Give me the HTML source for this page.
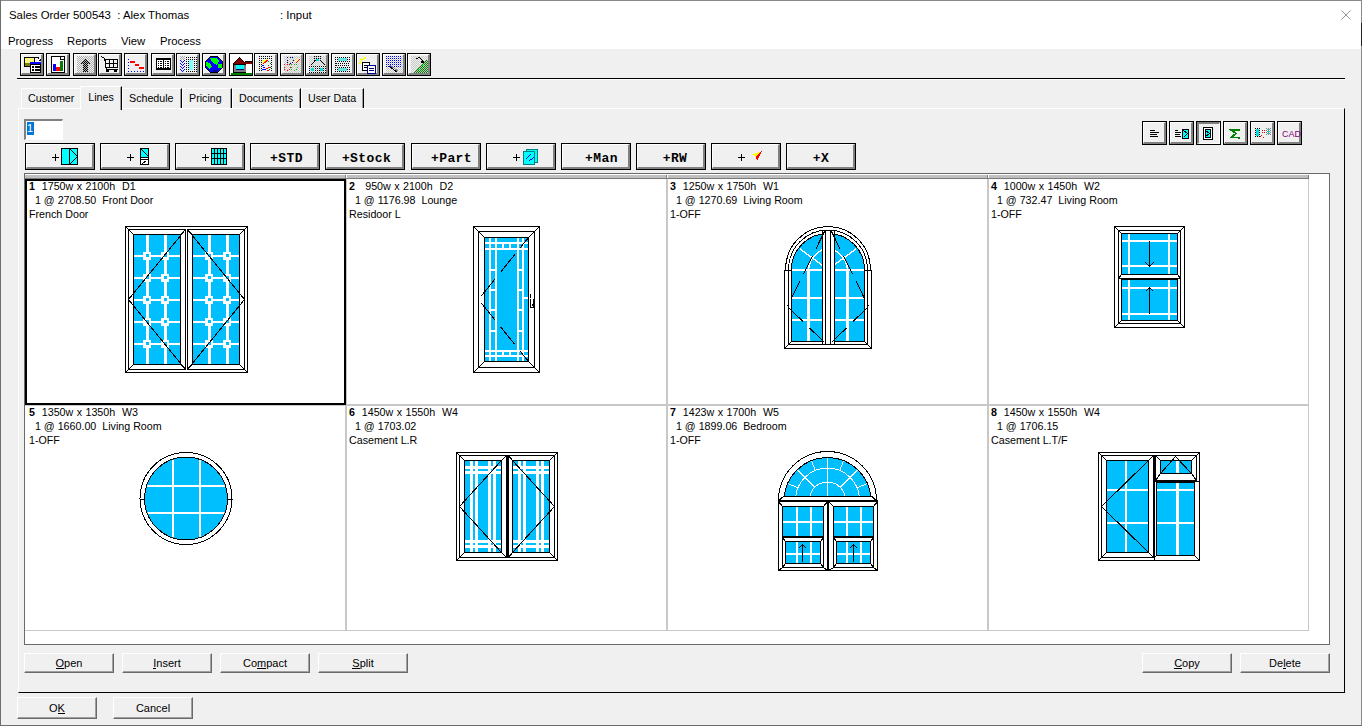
<!DOCTYPE html><html><head><meta charset="utf-8"><style>
*{margin:0;padding:0;box-sizing:border-box}
html,body{width:1362px;height:726px;overflow:hidden;background:#f0f0f0;font-family:"Liberation Sans",sans-serif;font-size:11px;color:#000}
.a{position:absolute}
.t{position:absolute;white-space:pre;line-height:14px}
.c{font-size:10.7px}
.tb{position:absolute;width:24px;height:23px;border:1px solid #000;background:#f0f0f0}
.tb i{position:absolute;left:0;top:0;right:0;bottom:0;border-top:1px solid #fff;border-left:1px solid #fff;border-right:2px solid #808080;border-bottom:2px solid #808080}
.pb{position:absolute;height:27px;border:1px solid #000;background:#f0f0f0;font:bold 13px "Liberation Mono",monospace;text-align:center;line-height:27px}
.pb i{position:absolute;left:0;top:0;right:0;bottom:0;border-top:1px solid #fff;border-left:1px solid #fff;border-right:2px solid #808080;border-bottom:2px solid #808080}
.bb{position:absolute;height:20px;background:#f0f0f0;border-top:1px solid #fff;border-left:1px solid #fff;border-right:1px solid #696969;border-bottom:1px solid #696969;box-shadow:inset -1px -1px 0 #a0a0a0;text-align:center;line-height:18px;font-size:11px}
.tab{position:absolute;top:88px;height:20px;font-size:10.7px;border-top:1px solid #fff;border-left:1px solid #fff;border-right:1px solid #000;box-shadow:inset -1px 0 0 #a0a0a0;text-align:left;padding-left:6px;line-height:18px}
u{text-decoration:none;border-bottom:1px solid #000;line-height:10px;display:inline-block}
</style></head><body>
<div class="a" style="left:0;top:0;width:1362px;height:49px;background:#fff"></div>
<div class="a" style="left:0;top:0;width:1362px;height:1px;background:#8a8a8a"></div>
<div class="a" style="left:0;top:0;width:1px;height:726px;background:#6d6d6d"></div>
<div class="a" style="left:1361px;top:0;width:1px;height:726px;background:#8a8a8a"></div>
<div class="a" style="left:1361px;top:23px;width:1px;height:23px;background:#222"></div>
<div class="a" style="left:0;top:725px;width:1362px;height:1px;background:#6d6d6d"></div>
<div class="t" style="left:9px;top:8px;font-size:11.4px">Sales Order 500543  : Alex Thomas</div>
<div class="t" style="left:280px;top:8px;font-size:11.4px">: Input</div>
<svg class="a" style="left:1340px;top:9px" width="13" height="13"><path d="M1.5 1.5L10.5 10.5M10.5 1.5L1.5 10.5" stroke="#999" stroke-width="1"/></svg>
<div class="t" style="left:8px;top:34px;font-size:11.3px">Progress</div>
<div class="t" style="left:67px;top:34px;font-size:11.3px">Reports</div>
<div class="t" style="left:121px;top:34px;font-size:11.3px">View</div>
<div class="t" style="left:160px;top:34px;font-size:11.3px">Process</div>
<div class="tb" style="left:20px;top:53px"><i></i></div>
<div class="tb" style="left:46px;top:53px"><i></i></div>
<div class="tb" style="left:73px;top:53px"><i></i></div>
<div class="tb" style="left:98px;top:53px"><i></i></div>
<div class="tb" style="left:124px;top:53px"><i></i></div>
<div class="tb" style="left:151px;top:53px"><i></i></div>
<div class="tb" style="left:176px;top:53px"><i></i></div>
<div class="tb" style="left:202px;top:53px"><i></i></div>
<div class="tb" style="left:229px;top:53px"><i style="border-right:1px solid #fff;border-bottom:1px solid #fff;background:#fff"></i></div>
<div class="tb" style="left:254px;top:53px"><i></i></div>
<div class="tb" style="left:280px;top:53px"><i></i></div>
<div class="tb" style="left:305px;top:53px"><i></i></div>
<div class="tb" style="left:331px;top:53px"><i></i></div>
<div class="tb" style="left:356px;top:53px"><i></i></div>
<div class="tb" style="left:382px;top:53px"><i></i></div>
<div class="tb" style="left:407px;top:53px"><i></i></div>
<div class="a" style="left:17px;top:78px;width:1328px;height:1px;background:#000"></div>
<div class="a" style="left:17px;top:79px;width:1328px;height:1px;background:#fff"></div>
<div class="a" style="left:18px;top:108px;width:1327px;height:585px;border-top:1px solid #fff;border-left:1px solid #fff;border-right:1px solid #000;border-bottom:1px solid #000"></div>
<div class="tab" style="left:21px;width:59px;border-right:none;box-shadow:none;">Customer</div>
<div class="tab" style="left:122px;width:60px;">Schedule</div>
<div class="tab" style="left:182px;width:50px;">Pricing</div>
<div class="tab" style="left:232px;width:69px;">Documents</div>
<div class="tab" style="left:301px;width:63px;">User Data</div>
<div class="a" style="left:80px;top:86px;width:42px;height:24px;font-size:10.7px;background:#f0f0f0;border-top:1px solid #fff;border-left:1px solid #fff;border-right:1px solid #000;box-shadow:inset -1px 0 0 #a0a0a0;text-align:center;line-height:20px">Lines</div>
<div class="a" style="left:24px;top:119px;width:39px;height:21px;background:#fff;border-top:2px solid #808080;border-left:2px solid #808080;border-right:1px solid #fff;border-bottom:1px solid #fff"></div>
<div class="a" style="left:27px;top:122px;width:7px;height:13px;background:#0078d7"></div>
<div class="t" style="left:27px;top:121px;color:#fff">1</div>
<div class="pb" style="left:25px;top:143px;width:70px"><i></i></div>
<div class="pb" style="left:100px;top:143px;width:70px"><i></i></div>
<div class="pb" style="left:175px;top:143px;width:70px"><i></i></div>
<div class="pb" style="left:250px;top:143px;width:70px;padding-left:3px;letter-spacing:0.4px;"><i></i><span style="position:relative;top:1px">+STD</span></div>
<div class="pb" style="left:325px;top:143px;width:80px;padding-left:3px;letter-spacing:0.4px;"><i></i><span style="position:relative;top:1px">+Stock</span></div>
<div class="pb" style="left:411px;top:143px;width:70px;padding-left:11px;letter-spacing:0.4px;"><i></i><span style="position:relative;top:1px">+Part</span></div>
<div class="pb" style="left:486px;top:143px;width:70px"><i></i></div>
<div class="pb" style="left:561px;top:143px;width:70px;padding-left:11px;letter-spacing:0.4px;"><i></i><span style="position:relative;top:1px">+Man</span></div>
<div class="pb" style="left:636px;top:143px;width:70px;padding-left:8px;letter-spacing:0.4px;"><i></i><span style="position:relative;top:1px">+RW</span></div>
<div class="pb" style="left:711px;top:143px;width:70px"><i></i></div>
<div class="pb" style="left:786px;top:143px;width:70px;padding-left:0px;letter-spacing:0.4px;"><i></i><span style="position:relative;top:1px">+X</span></div>
<svg class="a" style="left:52px;top:153px" width="8" height="9" shape-rendering="crispEdges"><path d="M0 4h7M3 0v7" stroke="#000" transform="translate(0,0.5)" /></svg>
<svg class="a" style="left:127px;top:153px" width="8" height="9" shape-rendering="crispEdges"><path d="M0 4h7M3 0v7" stroke="#000" transform="translate(0,0.5)" /></svg>
<svg class="a" style="left:202px;top:153px" width="8" height="9" shape-rendering="crispEdges"><path d="M0 4h7M3 0v7" stroke="#000" transform="translate(0,0.5)" /></svg>
<svg class="a" style="left:513px;top:153px" width="8" height="9" shape-rendering="crispEdges"><path d="M0 4h7M3 0v7" stroke="#000" transform="translate(0,0.5)" /></svg>
<svg class="a" style="left:738px;top:153px" width="8" height="9" shape-rendering="crispEdges"><path d="M0 4h7M3 0v7" stroke="#000" transform="translate(0,0.5)" /></svg>
<div class="tb" style="left:1142px;top:121px;width:25px;height:24px"><i></i></div>
<div class="tb" style="left:1169px;top:121px;width:25px;height:24px"><i></i></div>
<div class="tb" style="left:1196px;top:121px;width:25px;height:24px"><i style="border-top:2px solid #808080;border-left:2px solid #808080;border-right:1px solid #fff;border-bottom:1px solid #fff"></i></div>
<div class="tb" style="left:1223px;top:121px;width:25px;height:24px"><i></i></div>
<div class="tb" style="left:1250px;top:121px;width:25px;height:24px"><i></i></div>
<div class="tb" style="left:1277px;top:121px;width:25px;height:24px"><i></i></div>
<div class="a" style="left:24px;top:173px;width:1306px;height:472px;background:#fff;border:1px solid #6a6a6a"></div>
<div class="a" style="left:25px;top:175px;width:1284px;height:3px;background:#c0c0c0"></div>
<div class="a" style="left:25px;top:178px;width:1284px;height:1px;background:#7a7a7a"></div>
<div class="a" style="left:1308px;top:175px;width:1px;height:4px;background:#7a7a7a"></div>
<div class="a" style="left:345px;top:175px;width:1px;height:3px;background:#808080"></div>
<div class="a" style="left:346px;top:175px;width:1px;height:3px;background:#fff"></div>
<div class="a" style="left:666px;top:175px;width:1px;height:3px;background:#808080"></div>
<div class="a" style="left:667px;top:175px;width:1px;height:3px;background:#fff"></div>
<div class="a" style="left:987px;top:175px;width:1px;height:3px;background:#808080"></div>
<div class="a" style="left:988px;top:175px;width:1px;height:3px;background:#fff"></div>
<div class="a" style="left:345px;top:179px;width:2px;height:452px;background:#c8c8c8"></div>
<div class="a" style="left:666px;top:179px;width:2px;height:452px;background:#c8c8c8"></div>
<div class="a" style="left:987px;top:179px;width:2px;height:452px;background:#c8c8c8"></div>
<div class="a" style="left:1308px;top:179px;width:1px;height:452px;background:#c8c8c8"></div>
<div class="a" style="left:25px;top:404px;width:1284px;height:2px;background:#c8c8c8"></div>
<div class="a" style="left:25px;top:630px;width:1284px;height:1px;background:#c8c8c8"></div>
<div class="a" style="left:25px;top:179px;width:321px;height:226px;border:2px solid #000"></div>
<div class="t c" style="left:29px;top:179px;word-spacing:0.45px"><b>1</b>  1750w x 2100h  D1</div>
<div class="t c" style="left:29px;top:193px">  1 @ 2708.50  Front Door</div>
<div class="t c" style="left:29px;top:207px">French Door</div>
<div class="t c" style="left:349px;top:179px;word-spacing:0.45px"><b>2</b>   950w x 2100h  D2</div>
<div class="t c" style="left:349px;top:193px">  1 @ 1176.98  Lounge</div>
<div class="t c" style="left:349px;top:207px">Residoor L</div>
<div class="t c" style="left:670px;top:179px;word-spacing:0.45px"><b>3</b>  1250w x 1750h  W1</div>
<div class="t c" style="left:670px;top:193px">  1 @ 1270.69  Living Room</div>
<div class="t c" style="left:670px;top:207px">1-OFF</div>
<div class="t c" style="left:991px;top:179px;word-spacing:0.45px"><b>4</b>  1000w x 1450h  W2</div>
<div class="t c" style="left:991px;top:193px">  1 @ 732.47  Living Room</div>
<div class="t c" style="left:991px;top:207px">1-OFF</div>
<div class="t c" style="left:29px;top:405px;word-spacing:0.45px"><b>5</b>  1350w x 1350h  W3</div>
<div class="t c" style="left:29px;top:419px">  1 @ 1660.00  Living Room</div>
<div class="t c" style="left:29px;top:433px">1-OFF</div>
<div class="t c" style="left:349px;top:405px;word-spacing:0.45px"><b>6</b>  1450w x 1550h  W4</div>
<div class="t c" style="left:349px;top:419px">  1 @ 1703.02</div>
<div class="t c" style="left:349px;top:433px">Casement L.R</div>
<div class="t c" style="left:670px;top:405px;word-spacing:0.45px"><b>7</b>  1423w x 1700h  W5</div>
<div class="t c" style="left:670px;top:419px">  1 @ 1899.06  Bedroom</div>
<div class="t c" style="left:670px;top:433px">1-OFF</div>
<div class="t c" style="left:991px;top:405px;word-spacing:0.45px"><b>8</b>  1450w x 1550h  W4</div>
<div class="t c" style="left:991px;top:419px">  1 @ 1706.15</div>
<div class="t c" style="left:991px;top:433px">Casement L.T/F</div>
<svg class="a" style="left:0;top:0" width="1362" height="726" shape-rendering="crispEdges">
<rect x="125" y="226" width="123" height="147" fill="#fff"/>
<rect x="125" y="226" width="123" height="1" fill="#000"/>
<rect x="125" y="372" width="123" height="1" fill="#000"/>
<rect x="125" y="226" width="1" height="147" fill="#000"/>
<rect x="247" y="226" width="1" height="147" fill="#000"/>
<path d="M125.5 226.5L128.5 229.5" stroke="#000" fill="none" />
<path d="M247.5 226.5L244.5 229.5" stroke="#000" fill="none" />
<path d="M125.5 372.5L128.5 369.5" stroke="#000" fill="none" />
<path d="M247.5 372.5L244.5 369.5" stroke="#000" fill="none" />
<rect x="128" y="229" width="58" height="141" fill="#fff"/>
<rect x="128" y="229" width="58" height="1" fill="#000"/>
<rect x="128" y="369" width="58" height="1" fill="#000"/>
<rect x="128" y="229" width="1" height="141" fill="#000"/>
<rect x="185" y="229" width="1" height="141" fill="#000"/>
<rect x="133" y="234" width="48" height="131" fill="#00bfff"/>
<rect x="133" y="234" width="48" height="1" fill="#000"/>
<rect x="133" y="364" width="48" height="1" fill="#000"/>
<rect x="133" y="234" width="1" height="131" fill="#000"/>
<rect x="180" y="234" width="1" height="131" fill="#000"/>
<path d="M128.5 229.5L133.5 234.5" stroke="#000" fill="none" />
<path d="M185.5 229.5L180.5 234.5" stroke="#000" fill="none" />
<path d="M128.5 369.5L133.5 364.5" stroke="#000" fill="none" />
<path d="M185.5 369.5L180.5 364.5" stroke="#000" fill="none" />
<rect x="187" y="229" width="58" height="141" fill="#fff"/>
<rect x="187" y="229" width="58" height="1" fill="#000"/>
<rect x="187" y="369" width="58" height="1" fill="#000"/>
<rect x="187" y="229" width="1" height="141" fill="#000"/>
<rect x="244" y="229" width="1" height="141" fill="#000"/>
<rect x="192" y="234" width="48" height="131" fill="#00bfff"/>
<rect x="192" y="234" width="48" height="1" fill="#000"/>
<rect x="192" y="364" width="48" height="1" fill="#000"/>
<rect x="192" y="234" width="1" height="131" fill="#000"/>
<rect x="239" y="234" width="1" height="131" fill="#000"/>
<path d="M187.5 229.5L192.5 234.5" stroke="#000" fill="none" />
<path d="M244.5 229.5L239.5 234.5" stroke="#000" fill="none" />
<path d="M187.5 369.5L192.5 364.5" stroke="#000" fill="none" />
<path d="M244.5 369.5L239.5 364.5" stroke="#000" fill="none" />
<rect x="146" y="235" width="3" height="129" fill="#fff"/>
<rect x="164" y="235" width="3" height="129" fill="#fff"/>
<rect x="134" y="255" width="46" height="2" fill="#fff"/>
<rect x="143" y="252" width="8" height="8" fill="#fff"/>
<rect x="146" y="254" width="3" height="3" fill="#00bfff"/>
<rect x="161" y="252" width="8" height="8" fill="#fff"/>
<rect x="164" y="254" width="3" height="3" fill="#00bfff"/>
<rect x="134" y="277" width="46" height="2" fill="#fff"/>
<rect x="143" y="274" width="8" height="8" fill="#fff"/>
<rect x="146" y="276" width="3" height="3" fill="#00bfff"/>
<rect x="161" y="274" width="8" height="8" fill="#fff"/>
<rect x="164" y="276" width="3" height="3" fill="#00bfff"/>
<rect x="134" y="299" width="46" height="2" fill="#fff"/>
<rect x="143" y="296" width="8" height="8" fill="#fff"/>
<rect x="146" y="298" width="3" height="3" fill="#00bfff"/>
<rect x="161" y="296" width="8" height="8" fill="#fff"/>
<rect x="164" y="298" width="3" height="3" fill="#00bfff"/>
<rect x="134" y="321" width="46" height="2" fill="#fff"/>
<rect x="143" y="318" width="8" height="8" fill="#fff"/>
<rect x="146" y="320" width="3" height="3" fill="#00bfff"/>
<rect x="161" y="318" width="8" height="8" fill="#fff"/>
<rect x="164" y="320" width="3" height="3" fill="#00bfff"/>
<rect x="134" y="343" width="46" height="2" fill="#fff"/>
<rect x="143" y="340" width="8" height="8" fill="#fff"/>
<rect x="146" y="342" width="3" height="3" fill="#00bfff"/>
<rect x="161" y="340" width="8" height="8" fill="#fff"/>
<rect x="164" y="342" width="3" height="3" fill="#00bfff"/>
<rect x="208" y="235" width="3" height="129" fill="#fff"/>
<rect x="226" y="235" width="3" height="129" fill="#fff"/>
<rect x="193" y="255" width="46" height="2" fill="#fff"/>
<rect x="205" y="252" width="8" height="8" fill="#fff"/>
<rect x="208" y="254" width="3" height="3" fill="#00bfff"/>
<rect x="223" y="252" width="8" height="8" fill="#fff"/>
<rect x="226" y="254" width="3" height="3" fill="#00bfff"/>
<rect x="193" y="277" width="46" height="2" fill="#fff"/>
<rect x="205" y="274" width="8" height="8" fill="#fff"/>
<rect x="208" y="276" width="3" height="3" fill="#00bfff"/>
<rect x="223" y="274" width="8" height="8" fill="#fff"/>
<rect x="226" y="276" width="3" height="3" fill="#00bfff"/>
<rect x="193" y="299" width="46" height="2" fill="#fff"/>
<rect x="205" y="296" width="8" height="8" fill="#fff"/>
<rect x="208" y="298" width="3" height="3" fill="#00bfff"/>
<rect x="223" y="296" width="8" height="8" fill="#fff"/>
<rect x="226" y="298" width="3" height="3" fill="#00bfff"/>
<rect x="193" y="321" width="46" height="2" fill="#fff"/>
<rect x="205" y="318" width="8" height="8" fill="#fff"/>
<rect x="208" y="320" width="3" height="3" fill="#00bfff"/>
<rect x="223" y="318" width="8" height="8" fill="#fff"/>
<rect x="226" y="320" width="3" height="3" fill="#00bfff"/>
<rect x="193" y="343" width="46" height="2" fill="#fff"/>
<rect x="205" y="340" width="8" height="8" fill="#fff"/>
<rect x="208" y="342" width="3" height="3" fill="#00bfff"/>
<rect x="223" y="340" width="8" height="8" fill="#fff"/>
<rect x="226" y="342" width="3" height="3" fill="#00bfff"/>
<path d="M185.5 229.5L128.5 299.5" stroke="#000" fill="none" />
<path d="M128.5 299.5L185.5 369.5" stroke="#000" fill="none" />
<path d="M187.5 229.5L244.5 299.5" stroke="#000" fill="none" />
<path d="M244.5 299.5L187.5 369.5" stroke="#000" fill="none" />
<rect x="473" y="226" width="67" height="147" fill="#fff"/>
<rect x="473" y="226" width="67" height="1" fill="#000"/>
<rect x="473" y="372" width="67" height="1" fill="#000"/>
<rect x="473" y="226" width="1" height="147" fill="#000"/>
<rect x="539" y="226" width="1" height="147" fill="#000"/>
<path d="M473.5 226.5L478.5 231.5" stroke="#000" fill="none" />
<path d="M539.5 226.5L534.5 231.5" stroke="#000" fill="none" />
<path d="M473.5 372.5L478.5 367.5" stroke="#000" fill="none" />
<path d="M539.5 372.5L534.5 367.5" stroke="#000" fill="none" />
<rect x="478" y="231" width="57" height="137" fill="#fff"/>
<rect x="478" y="231" width="57" height="1" fill="#000"/>
<rect x="478" y="367" width="57" height="1" fill="#000"/>
<rect x="478" y="231" width="1" height="137" fill="#000"/>
<rect x="534" y="231" width="1" height="137" fill="#000"/>
<rect x="484" y="237" width="45" height="125" fill="#00bfff"/>
<rect x="484" y="237" width="45" height="1" fill="#000"/>
<rect x="484" y="361" width="45" height="1" fill="#000"/>
<rect x="484" y="237" width="1" height="125" fill="#000"/>
<rect x="528" y="237" width="1" height="125" fill="#000"/>
<path d="M478.5 231.5L484.5 237.5" stroke="#000" fill="none" />
<path d="M534.5 231.5L528.5 237.5" stroke="#000" fill="none" />
<path d="M478.5 367.5L484.5 361.5" stroke="#000" fill="none" />
<path d="M534.5 367.5L528.5 361.5" stroke="#000" fill="none" />
<rect x="489" y="238" width="2" height="123" fill="#fff"/>
<rect x="495" y="238" width="2" height="123" fill="#fff"/>
<rect x="517" y="238" width="2" height="123" fill="#fff"/>
<rect x="522" y="238" width="2" height="123" fill="#fff"/>
<rect x="485" y="242" width="43" height="2" fill="#fff"/>
<rect x="485" y="248" width="43" height="2" fill="#fff"/>
<rect x="485" y="350" width="43" height="2" fill="#fff"/>
<rect x="485" y="355" width="43" height="2" fill="#fff"/>
<rect x="502" y="244" width="2" height="4" fill="#fff"/>
<rect x="502" y="352" width="2" height="3" fill="#fff"/>
<rect x="509" y="244" width="2" height="4" fill="#fff"/>
<rect x="509" y="352" width="2" height="3" fill="#fff"/>
<rect x="491" y="269" width="4" height="2" fill="#fff"/>
<rect x="519" y="269" width="3" height="2" fill="#fff"/>
<rect x="491" y="289" width="4" height="2" fill="#fff"/>
<rect x="519" y="289" width="3" height="2" fill="#fff"/>
<rect x="491" y="309" width="4" height="2" fill="#fff"/>
<rect x="519" y="309" width="3" height="2" fill="#fff"/>
<rect x="491" y="330" width="4" height="2" fill="#fff"/>
<rect x="519" y="330" width="3" height="2" fill="#fff"/>
<rect x="524" y="297" width="4" height="2" fill="#fff"/>
<path d="M528.5 237.5L478.5 299.5L528.5 361.5" stroke="#000" fill="none" stroke-dasharray="22 9" stroke-dashoffset="9"/>
<rect x="530" y="294" width="1" height="4" fill="#000"/>
<path d="M530.5 298.5V307.5H533.5V298.5" stroke="#000" fill="none" />
<rect x="532" y="304" width="1" height="2" fill="#000"/>
<rect x="784" y="270" width="1" height="79" fill="#000"/>
<rect x="871" y="270" width="1" height="79" fill="#000"/>
<rect x="784" y="348" width="88" height="1" fill="#000"/>
<rect x="785" y="270" width="86" height="78" fill="#fff"/>
<path d="M785.5 269.5A42.5 43 0 0 1 870.5 269.5" stroke="#000" fill="#fff" />
<rect x="786" y="262" width="84" height="8" fill="#fff"/>
<path d="M785.5 269.5A42.5 43 0 0 1 870.5 269.5" stroke="#000" fill="#fff" />
<path d="M788.5 269.5A39.5 39.5 0 0 1 867.5 269.5" stroke="#000" fill="none" />
<rect x="788" y="270" width="1" height="75" fill="#000"/>
<rect x="867" y="270" width="1" height="75" fill="#000"/>
<path d="M791.5 341.5V269.5A36.5 36 0 0 1 864.5 269.5V341.5Z" stroke="#000" fill="#00bfff" />
<rect x="784" y="270" width="8" height="1" fill="#000"/>
<rect x="864" y="270" width="8" height="1" fill="#000"/>
<rect x="792" y="269" width="72" height="2" fill="#fff"/>
<rect x="792" y="297" width="72" height="2" fill="#fff"/>
<rect x="792" y="319" width="72" height="2" fill="#fff"/>
<rect x="807" y="269" width="3" height="72" fill="#fff"/>
<rect x="846" y="269" width="3" height="72" fill="#fff"/>
<path d="M800 249L822 265M808.5 269Q810 256 822 250M856 249L834 265M847.5 269Q846 256 834 250" stroke="#fff" fill="none" stroke-width="1.5"/>
<rect x="822" y="230" width="13" height="112" fill="#fff"/>
<rect x="822" y="230" width="1" height="115" fill="#000"/>
<rect x="825" y="230" width="1" height="115" fill="#000"/>
<rect x="830" y="230" width="1" height="115" fill="#000"/>
<rect x="834" y="230" width="1" height="115" fill="#000"/>
<rect x="822" y="230" width="13" height="1" fill="#000"/>
<rect x="788" y="344" width="80" height="1" fill="#000"/>
<path d="M784.5 348.5L788.5 344.5" stroke="#000" fill="none" />
<path d="M871.5 348.5L867.5 344.5" stroke="#000" fill="none" />
<path d="M788.5 344.5L791.5 341.5" stroke="#000" fill="none" />
<path d="M867.5 344.5L864.5 341.5" stroke="#000" fill="none" />
<path d="M824.5 231.5L787.5 306.5" stroke="#000" fill="none" stroke-dasharray="20 7.5"/>
<path d="M787.5 306.5L824.5 342.5" stroke="#000" fill="none" stroke-dasharray="0 2.5 19 9 20"/>
<path d="M831.5 231.5L868.5 306.5" stroke="#000" fill="none" stroke-dasharray="20 7.5"/>
<path d="M868.5 306.5L831.5 342.5" stroke="#000" fill="none" stroke-dasharray="0 2.5 19 9 20"/>
<rect x="1114" y="226" width="71" height="102" fill="#fff"/>
<rect x="1114" y="226" width="71" height="1" fill="#000"/>
<rect x="1114" y="327" width="71" height="1" fill="#000"/>
<rect x="1114" y="226" width="1" height="102" fill="#000"/>
<rect x="1184" y="226" width="1" height="102" fill="#000"/>
<path d="M1114.5 226.5L1118.5 230.5" stroke="#000" fill="none" />
<path d="M1184.5 226.5L1180.5 230.5" stroke="#000" fill="none" />
<path d="M1114.5 327.5L1118.5 323.5" stroke="#000" fill="none" />
<path d="M1184.5 327.5L1180.5 323.5" stroke="#000" fill="none" />
<rect x="1118" y="275" width="63" height="49" fill="#fff"/>
<rect x="1118" y="275" width="63" height="1" fill="#000"/>
<rect x="1118" y="323" width="63" height="1" fill="#000"/>
<rect x="1118" y="275" width="1" height="49" fill="#000"/>
<rect x="1180" y="275" width="1" height="49" fill="#000"/>
<rect x="1121" y="279" width="57" height="42" fill="#00bfff"/>
<rect x="1121" y="279" width="57" height="1" fill="#000"/>
<rect x="1121" y="320" width="57" height="1" fill="#000"/>
<rect x="1121" y="279" width="1" height="42" fill="#000"/>
<rect x="1177" y="279" width="1" height="42" fill="#000"/>
<path d="M1118.5 275.5L1121.5 279.5" stroke="#000" fill="none" />
<path d="M1180.5 275.5L1177.5 279.5" stroke="#000" fill="none" />
<path d="M1118.5 323.5L1121.5 320.5" stroke="#000" fill="none" />
<path d="M1180.5 323.5L1177.5 320.5" stroke="#000" fill="none" />
<rect x="1118" y="230" width="63" height="49" fill="#fff"/>
<rect x="1118" y="230" width="63" height="1" fill="#000"/>
<rect x="1118" y="278" width="63" height="1" fill="#000"/>
<rect x="1118" y="230" width="1" height="49" fill="#000"/>
<rect x="1180" y="230" width="1" height="49" fill="#000"/>
<rect x="1121" y="233" width="57" height="42" fill="#00bfff"/>
<rect x="1121" y="233" width="57" height="1" fill="#000"/>
<rect x="1121" y="274" width="57" height="1" fill="#000"/>
<rect x="1121" y="233" width="1" height="42" fill="#000"/>
<rect x="1177" y="233" width="1" height="42" fill="#000"/>
<path d="M1118.5 230.5L1121.5 233.5" stroke="#000" fill="none" />
<path d="M1180.5 230.5L1177.5 233.5" stroke="#000" fill="none" />
<path d="M1118.5 278.5L1121.5 274.5" stroke="#000" fill="none" />
<path d="M1180.5 278.5L1177.5 274.5" stroke="#000" fill="none" />
<rect x="1128" y="234" width="2" height="40" fill="#fff"/>
<rect x="1168" y="234" width="2" height="40" fill="#fff"/>
<rect x="1122" y="240" width="55" height="2" fill="#fff"/>
<rect x="1122" y="265" width="55" height="2" fill="#fff"/>
<rect x="1128" y="280" width="2" height="40" fill="#fff"/>
<rect x="1168" y="280" width="2" height="40" fill="#fff"/>
<rect x="1122" y="287" width="55" height="2" fill="#fff"/>
<rect x="1122" y="313" width="55" height="2" fill="#fff"/>
<rect x="1149" y="241" width="1" height="26" fill="#000"/>
<path d="M1145.5 262.5L1149.5 266.5L1153.5 262.5" stroke="#000" fill="none" />
<rect x="1149" y="287" width="1" height="27" fill="#000"/>
<path d="M1145.5 291.5L1149.5 287.5L1153.5 291.5" stroke="#000" fill="none" />
<circle cx="186" cy="498.5" r="46" fill="#fff" stroke="#000"/>
<circle cx="186" cy="498.5" r="41.5" fill="#00bfff" stroke="#000"/>
<clipPath id="c5"><circle cx="186" cy="498.5" r="41"/></clipPath>
<g clip-path="url(#c5)">
<rect x="172" y="450" width="2" height="101" fill="#fff"/>
<rect x="199" y="450" width="2" height="101" fill="#fff"/>
<rect x="140" y="485" width="93" height="2" fill="#fff"/>
<rect x="140" y="512" width="93" height="2" fill="#fff"/>
</g>
<rect x="140" y="499" width="5" height="1" fill="#000"/>
<rect x="228" y="499" width="5" height="1" fill="#000"/>
<rect x="456" y="452" width="102" height="109" fill="#fff"/>
<rect x="456" y="452" width="102" height="1" fill="#000"/>
<rect x="456" y="560" width="102" height="1" fill="#000"/>
<rect x="456" y="452" width="1" height="109" fill="#000"/>
<rect x="557" y="452" width="1" height="109" fill="#000"/>
<path d="M456.5 452.5L459.5 455.5" stroke="#000" fill="none" />
<path d="M557.5 452.5L554.5 455.5" stroke="#000" fill="none" />
<path d="M456.5 560.5L459.5 557.5" stroke="#000" fill="none" />
<path d="M557.5 560.5L554.5 557.5" stroke="#000" fill="none" />
<rect x="459" y="455" width="48" height="103" fill="#fff"/>
<rect x="459" y="455" width="48" height="1" fill="#000"/>
<rect x="459" y="557" width="48" height="1" fill="#000"/>
<rect x="459" y="455" width="1" height="103" fill="#000"/>
<rect x="506" y="455" width="1" height="103" fill="#000"/>
<rect x="464" y="460" width="38" height="93" fill="#00bfff"/>
<rect x="464" y="460" width="38" height="1" fill="#000"/>
<rect x="464" y="552" width="38" height="1" fill="#000"/>
<rect x="464" y="460" width="1" height="93" fill="#000"/>
<rect x="501" y="460" width="1" height="93" fill="#000"/>
<path d="M459.5 455.5L464.5 460.5" stroke="#000" fill="none" />
<path d="M506.5 455.5L501.5 460.5" stroke="#000" fill="none" />
<path d="M459.5 557.5L464.5 552.5" stroke="#000" fill="none" />
<path d="M506.5 557.5L501.5 552.5" stroke="#000" fill="none" />
<rect x="508" y="455" width="47" height="103" fill="#fff"/>
<rect x="508" y="455" width="47" height="1" fill="#000"/>
<rect x="508" y="557" width="47" height="1" fill="#000"/>
<rect x="508" y="455" width="1" height="103" fill="#000"/>
<rect x="554" y="455" width="1" height="103" fill="#000"/>
<rect x="512" y="460" width="38" height="93" fill="#00bfff"/>
<rect x="512" y="460" width="38" height="1" fill="#000"/>
<rect x="512" y="552" width="38" height="1" fill="#000"/>
<rect x="512" y="460" width="1" height="93" fill="#000"/>
<rect x="549" y="460" width="1" height="93" fill="#000"/>
<path d="M508.5 455.5L512.5 460.5" stroke="#000" fill="none" />
<path d="M554.5 455.5L549.5 460.5" stroke="#000" fill="none" />
<path d="M508.5 557.5L512.5 552.5" stroke="#000" fill="none" />
<path d="M554.5 557.5L549.5 552.5" stroke="#000" fill="none" />
<rect x="506" y="455" width="2" height="103" fill="#000"/>
<rect x="470" y="461" width="3" height="91" fill="#fff"/>
<rect x="475" y="461" width="3" height="91" fill="#fff"/>
<rect x="488" y="461" width="3" height="91" fill="#fff"/>
<rect x="493" y="461" width="3" height="91" fill="#fff"/>
<rect x="465" y="466" width="36" height="3" fill="#fff"/>
<rect x="465" y="471" width="36" height="3" fill="#fff"/>
<rect x="465" y="540" width="36" height="3" fill="#fff"/>
<rect x="465" y="545" width="36" height="3" fill="#fff"/>
<rect x="518" y="461" width="3" height="91" fill="#fff"/>
<rect x="523" y="461" width="3" height="91" fill="#fff"/>
<rect x="536" y="461" width="3" height="91" fill="#fff"/>
<rect x="541" y="461" width="3" height="91" fill="#fff"/>
<rect x="513" y="466" width="36" height="3" fill="#fff"/>
<rect x="513" y="471" width="36" height="3" fill="#fff"/>
<rect x="513" y="540" width="36" height="3" fill="#fff"/>
<rect x="513" y="545" width="36" height="3" fill="#fff"/>
<path d="M501.5 460.5L459.5 506.5" stroke="#000" fill="none" />
<path d="M459.5 506.5L501.5 552.5" stroke="#000" fill="none" />
<path d="M512.5 460.5L554.5 506.5" stroke="#000" fill="none" />
<path d="M554.5 506.5L512.5 552.5" stroke="#000" fill="none" />
<path d="M778.5 500.5A49 49 0 0 1 876.5 500.5Z" stroke="#000" fill="#fff" />
<clipPath id="c7g"><rect x="770" y="440" width="120" height="56.5"/></clipPath>
<circle cx="827.5" cy="501" r="43.5" fill="#00bfff" stroke="#000" clip-path="url(#c7g)"/>
<clipPath id="c7"><circle cx="827.5" cy="501" r="43"/></clipPath><g clip-path="url(#c7g)"><g clip-path="url(#c7)" stroke="#fff" fill="none">
<circle cx="827.5" cy="500" r="18"/><circle cx="827.5" cy="500" r="32"/>
<path d="M827.5 457V496M814.8 487.3L795 467.5M840.2 487.3L860 467.5M798 487.8L784 482M857 487.8L871 482M815.3 470.4L809 455M839.7 470.4L846 455"/>
</g></g>
<rect x="783" y="496" width="90" height="1" fill="#000"/>
<rect x="778" y="500" width="100" height="2" fill="#000"/>
<path d="M778.5 500.5L783.5 496.5" stroke="#000" fill="none" />
<path d="M876.5 500.5L871.5 496.5" stroke="#000" fill="none" />
<rect x="778" y="500" width="100" height="71" fill="#fff"/>
<rect x="778" y="500" width="100" height="1" fill="#000"/>
<rect x="778" y="570" width="100" height="1" fill="#000"/>
<rect x="778" y="500" width="1" height="71" fill="#000"/>
<rect x="877" y="500" width="1" height="71" fill="#000"/>
<rect x="778" y="501" width="100" height="1" fill="#000"/>
<rect x="827" y="502" width="2" height="69" fill="#000"/>
<path d="M778.5 501.5L782.5 506.5" stroke="#000" fill="none" />
<path d="M827.5 501.5L823.5 506.5" stroke="#000" fill="none" />
<path d="M778.5 570.5L782.5 567.5" stroke="#000" fill="none" />
<path d="M827.5 570.5L823.5 567.5" stroke="#000" fill="none" />
<rect x="782" y="506" width="42" height="31" fill="#00bfff"/>
<rect x="782" y="506" width="42" height="1" fill="#000"/>
<rect x="782" y="536" width="42" height="1" fill="#000"/>
<rect x="782" y="506" width="1" height="31" fill="#000"/>
<rect x="823" y="506" width="1" height="31" fill="#000"/>
<rect x="782" y="537" width="42" height="31" fill="#fff"/>
<rect x="782" y="537" width="42" height="1" fill="#000"/>
<rect x="782" y="567" width="42" height="1" fill="#000"/>
<rect x="782" y="537" width="1" height="31" fill="#000"/>
<rect x="823" y="537" width="1" height="31" fill="#000"/>
<rect x="785" y="541" width="36" height="23" fill="#00bfff"/>
<rect x="785" y="541" width="36" height="1" fill="#000"/>
<rect x="785" y="563" width="36" height="1" fill="#000"/>
<rect x="785" y="541" width="1" height="23" fill="#000"/>
<rect x="820" y="541" width="1" height="23" fill="#000"/>
<path d="M782.5 537.5L785.5 541.5" stroke="#000" fill="none" />
<path d="M823.5 537.5L820.5 541.5" stroke="#000" fill="none" />
<path d="M782.5 567.5L785.5 563.5" stroke="#000" fill="none" />
<path d="M823.5 567.5L820.5 563.5" stroke="#000" fill="none" />
<rect x="796" y="507" width="2" height="29" fill="#fff"/>
<rect x="796" y="542" width="2" height="21" fill="#fff"/>
<rect x="810" y="507" width="2" height="29" fill="#fff"/>
<rect x="810" y="542" width="2" height="21" fill="#fff"/>
<rect x="783" y="521" width="40" height="2" fill="#fff"/>
<rect x="786" y="553" width="34" height="2" fill="#fff"/>
<rect x="802" y="545" width="1" height="17" fill="#000"/>
<path d="M798.5 548.5L802.5 544.5L806.5 548.5" stroke="#000" fill="none" />
<path d="M828.5 501.5L833.5 506.5" stroke="#000" fill="none" />
<path d="M877.5 501.5L873.5 506.5" stroke="#000" fill="none" />
<path d="M828.5 570.5L833.5 567.5" stroke="#000" fill="none" />
<path d="M877.5 570.5L873.5 567.5" stroke="#000" fill="none" />
<rect x="833" y="506" width="41" height="31" fill="#00bfff"/>
<rect x="833" y="506" width="41" height="1" fill="#000"/>
<rect x="833" y="536" width="41" height="1" fill="#000"/>
<rect x="833" y="506" width="1" height="31" fill="#000"/>
<rect x="873" y="506" width="1" height="31" fill="#000"/>
<rect x="833" y="537" width="41" height="31" fill="#fff"/>
<rect x="833" y="537" width="41" height="1" fill="#000"/>
<rect x="833" y="567" width="41" height="1" fill="#000"/>
<rect x="833" y="537" width="1" height="31" fill="#000"/>
<rect x="873" y="537" width="1" height="31" fill="#000"/>
<rect x="836" y="541" width="35" height="23" fill="#00bfff"/>
<rect x="836" y="541" width="35" height="1" fill="#000"/>
<rect x="836" y="563" width="35" height="1" fill="#000"/>
<rect x="836" y="541" width="1" height="23" fill="#000"/>
<rect x="870" y="541" width="1" height="23" fill="#000"/>
<path d="M833.5 537.5L836.5 541.5" stroke="#000" fill="none" />
<path d="M873.5 537.5L870.5 541.5" stroke="#000" fill="none" />
<path d="M833.5 567.5L836.5 563.5" stroke="#000" fill="none" />
<path d="M873.5 567.5L870.5 563.5" stroke="#000" fill="none" />
<rect x="846" y="507" width="2" height="29" fill="#fff"/>
<rect x="846" y="542" width="2" height="21" fill="#fff"/>
<rect x="860" y="507" width="2" height="29" fill="#fff"/>
<rect x="860" y="542" width="2" height="21" fill="#fff"/>
<rect x="834" y="521" width="39" height="2" fill="#fff"/>
<rect x="837" y="553" width="33" height="2" fill="#fff"/>
<rect x="853" y="545" width="1" height="17" fill="#000"/>
<path d="M849.5 548.5L853.5 544.5L857.5 548.5" stroke="#000" fill="none" />
<rect x="1098" y="452" width="102" height="109" fill="#fff"/>
<rect x="1098" y="452" width="102" height="1" fill="#000"/>
<rect x="1098" y="560" width="102" height="1" fill="#000"/>
<rect x="1098" y="452" width="1" height="109" fill="#000"/>
<rect x="1199" y="452" width="1" height="109" fill="#000"/>
<path d="M1098.5 452.5L1101.5 455.5" stroke="#000" fill="none" />
<path d="M1098.5 560.5L1101.5 557.5" stroke="#000" fill="none" />
<rect x="1101" y="455" width="53" height="103" fill="#fff"/>
<rect x="1101" y="455" width="53" height="1" fill="#000"/>
<rect x="1101" y="557" width="53" height="1" fill="#000"/>
<rect x="1101" y="455" width="1" height="103" fill="#000"/>
<rect x="1153" y="455" width="1" height="103" fill="#000"/>
<rect x="1106" y="460" width="43" height="93" fill="#00bfff"/>
<rect x="1106" y="460" width="43" height="1" fill="#000"/>
<rect x="1106" y="552" width="43" height="1" fill="#000"/>
<rect x="1106" y="460" width="1" height="93" fill="#000"/>
<rect x="1148" y="460" width="1" height="93" fill="#000"/>
<path d="M1101.5 455.5L1106.5 460.5" stroke="#000" fill="none" />
<path d="M1153.5 455.5L1148.5 460.5" stroke="#000" fill="none" />
<path d="M1101.5 557.5L1106.5 552.5" stroke="#000" fill="none" />
<path d="M1153.5 557.5L1148.5 552.5" stroke="#000" fill="none" />
<rect x="1154" y="455" width="1" height="106" fill="#000"/>
<path d="M1199.5 452.5L1196.5 455.5" stroke="#000" fill="none" />
<rect x="1155" y="455" width="42" height="26" fill="#fff"/>
<rect x="1155" y="455" width="42" height="1" fill="#000"/>
<rect x="1155" y="480" width="42" height="1" fill="#000"/>
<rect x="1155" y="455" width="1" height="26" fill="#000"/>
<rect x="1196" y="455" width="1" height="26" fill="#000"/>
<rect x="1160" y="460" width="32" height="14" fill="#00bfff"/>
<rect x="1160" y="460" width="32" height="1" fill="#000"/>
<rect x="1160" y="473" width="32" height="1" fill="#000"/>
<rect x="1160" y="460" width="1" height="14" fill="#000"/>
<rect x="1191" y="460" width="1" height="14" fill="#000"/>
<path d="M1155.5 455.5L1160.5 460.5" stroke="#000" fill="none" />
<path d="M1196.5 455.5L1191.5 460.5" stroke="#000" fill="none" />
<path d="M1155.5 480.5L1160.5 473.5" stroke="#000" fill="none" />
<path d="M1196.5 480.5L1191.5 473.5" stroke="#000" fill="none" />
<rect x="1154" y="481" width="46" height="1" fill="#000"/>
<rect x="1156" y="482" width="39" height="74" fill="#00bfff"/>
<rect x="1156" y="482" width="39" height="1" fill="#000"/>
<rect x="1156" y="555" width="39" height="1" fill="#000"/>
<rect x="1156" y="482" width="1" height="74" fill="#000"/>
<rect x="1194" y="482" width="1" height="74" fill="#000"/>
<path d="M1194.5 555.5L1199.5 560.5" stroke="#000" fill="none" />
<path d="M1156.5 555.5L1154.5 557.5" stroke="#000" fill="none" />
<rect x="1125" y="461" width="2" height="91" fill="#fff"/>
<rect x="1176" y="483" width="3" height="72" fill="#fff"/>
<rect x="1176" y="461" width="3" height="12" fill="#fff"/>
<rect x="1107" y="489" width="41" height="2" fill="#fff"/>
<rect x="1157" y="489" width="37" height="2" fill="#fff"/>
<rect x="1107" y="522" width="41" height="2" fill="#fff"/>
<rect x="1157" y="522" width="37" height="2" fill="#fff"/>
<path d="M1148.5 460.5L1101.5 506.5" stroke="#000" fill="none" />
<path d="M1101.5 506.5L1148.5 552.5" stroke="#000" fill="none" />
<path d="M1160.5 473.5L1175.5 456.5" stroke="#000" fill="none" />
<path d="M1175.5 456.5L1191.5 473.5" stroke="#000" fill="none" />
<rect x="25" y="58" width="1" height="1" fill="#ffff00"/>
<rect x="27" y="58" width="1" height="1" fill="#ffff00"/>
<rect x="29" y="58" width="1" height="1" fill="#ffff00"/>
<rect x="31" y="58" width="1" height="1" fill="#ffff00"/>
<rect x="33" y="58" width="1" height="1" fill="#ffff00"/>
<rect x="26" y="59" width="1" height="1" fill="#ffff00"/>
<rect x="28" y="59" width="1" height="1" fill="#ffff00"/>
<rect x="30" y="59" width="1" height="1" fill="#ffff00"/>
<rect x="32" y="59" width="1" height="1" fill="#ffff00"/>
<rect x="34" y="59" width="1" height="1" fill="#ffff00"/>
<rect x="25" y="60" width="1" height="1" fill="#ffff00"/>
<rect x="27" y="60" width="1" height="1" fill="#ffff00"/>
<rect x="29" y="60" width="1" height="1" fill="#ffff00"/>
<rect x="31" y="60" width="1" height="1" fill="#ffff00"/>
<rect x="33" y="60" width="1" height="1" fill="#ffff00"/>
<rect x="26" y="61" width="1" height="1" fill="#ffff00"/>
<rect x="28" y="61" width="1" height="1" fill="#ffff00"/>
<rect x="30" y="61" width="1" height="1" fill="#ffff00"/>
<rect x="32" y="61" width="1" height="1" fill="#ffff00"/>
<rect x="34" y="61" width="1" height="1" fill="#ffff00"/>
<rect x="25" y="62" width="1" height="1" fill="#ffff00"/>
<rect x="27" y="62" width="1" height="1" fill="#ffff00"/>
<rect x="29" y="62" width="1" height="1" fill="#ffff00"/>
<rect x="31" y="62" width="1" height="1" fill="#ffff00"/>
<rect x="33" y="62" width="1" height="1" fill="#ffff00"/>
<rect x="26" y="63" width="1" height="1" fill="#ffff00"/>
<rect x="28" y="63" width="1" height="1" fill="#ffff00"/>
<rect x="30" y="63" width="1" height="1" fill="#ffff00"/>
<rect x="32" y="63" width="1" height="1" fill="#ffff00"/>
<rect x="34" y="63" width="1" height="1" fill="#ffff00"/>
<rect x="25" y="64" width="1" height="1" fill="#ffff00"/>
<rect x="27" y="64" width="1" height="1" fill="#ffff00"/>
<rect x="29" y="64" width="1" height="1" fill="#ffff00"/>
<rect x="31" y="64" width="1" height="1" fill="#ffff00"/>
<rect x="33" y="64" width="1" height="1" fill="#ffff00"/>
<rect x="26" y="65" width="1" height="1" fill="#ffff00"/>
<rect x="28" y="65" width="1" height="1" fill="#ffff00"/>
<rect x="30" y="65" width="1" height="1" fill="#ffff00"/>
<rect x="32" y="65" width="1" height="1" fill="#ffff00"/>
<rect x="34" y="65" width="1" height="1" fill="#ffff00"/>
<rect x="24" y="57" width="11" height="1" fill="#000"/>
<rect x="24" y="66" width="11" height="1" fill="#000"/>
<rect x="24" y="57" width="1" height="10" fill="#000"/>
<rect x="34" y="57" width="1" height="10" fill="#000"/>
<rect x="25" y="63" width="6" height="3" fill="#808000"/>
<rect x="30" y="62" width="11" height="2" fill="#0000ff"/>
<rect x="30" y="64" width="11" height="9" fill="#fff"/>
<rect x="30" y="64" width="11" height="1" fill="#000"/>
<rect x="30" y="72" width="11" height="1" fill="#000"/>
<rect x="30" y="64" width="1" height="9" fill="#000"/>
<rect x="40" y="64" width="1" height="9" fill="#000"/>
<rect x="32" y="66" width="2" height="2" fill="#000"/>
<rect x="35" y="66" width="5" height="2" fill="#000"/>
<rect x="32" y="69" width="2" height="2" fill="#000"/>
<rect x="35" y="69" width="5" height="2" fill="#000"/>
<path d="M34.5 58.5Q37.5 55.5 39.5 59.5M38.5 60.5H40.5V58.5" stroke="#000" fill="none" />
<rect x="51" y="56" width="14" height="17" fill="#fff"/>
<rect x="51" y="56" width="14" height="1" fill="#000"/>
<rect x="51" y="72" width="14" height="1" fill="#000"/>
<rect x="51" y="56" width="1" height="17" fill="#000"/>
<rect x="64" y="56" width="1" height="17" fill="#000"/>
<rect x="61" y="57" width="3" height="3" fill="#fff"/>
<path d="M60.5 56.5V59.5H64.5" stroke="#000" fill="none" />
<rect x="53" y="64" width="3" height="7" fill="#0000ff"/>
<rect x="56" y="67" width="4" height="4" fill="#ff0000"/>
<rect x="60" y="61" width="3" height="10" fill="#008000"/>
<rect x="77" y="56" width="1" height="1" fill="#b0b0b0"/>
<rect x="79" y="56" width="1" height="1" fill="#b0b0b0"/>
<rect x="81" y="56" width="1" height="1" fill="#b0b0b0"/>
<rect x="83" y="56" width="1" height="1" fill="#b0b0b0"/>
<rect x="85" y="56" width="1" height="1" fill="#b0b0b0"/>
<rect x="87" y="56" width="1" height="1" fill="#b0b0b0"/>
<rect x="89" y="56" width="1" height="1" fill="#b0b0b0"/>
<rect x="91" y="56" width="1" height="1" fill="#b0b0b0"/>
<rect x="93" y="56" width="1" height="1" fill="#b0b0b0"/>
<rect x="78" y="57" width="1" height="1" fill="#b0b0b0"/>
<rect x="80" y="57" width="1" height="1" fill="#b0b0b0"/>
<rect x="82" y="57" width="1" height="1" fill="#b0b0b0"/>
<rect x="84" y="57" width="1" height="1" fill="#b0b0b0"/>
<rect x="86" y="57" width="1" height="1" fill="#b0b0b0"/>
<rect x="88" y="57" width="1" height="1" fill="#b0b0b0"/>
<rect x="90" y="57" width="1" height="1" fill="#b0b0b0"/>
<rect x="92" y="57" width="1" height="1" fill="#b0b0b0"/>
<rect x="77" y="58" width="1" height="1" fill="#b0b0b0"/>
<rect x="79" y="58" width="1" height="1" fill="#b0b0b0"/>
<rect x="81" y="58" width="1" height="1" fill="#b0b0b0"/>
<rect x="83" y="58" width="1" height="1" fill="#b0b0b0"/>
<rect x="85" y="58" width="1" height="1" fill="#b0b0b0"/>
<rect x="87" y="58" width="1" height="1" fill="#b0b0b0"/>
<rect x="89" y="58" width="1" height="1" fill="#b0b0b0"/>
<rect x="91" y="58" width="1" height="1" fill="#b0b0b0"/>
<rect x="93" y="58" width="1" height="1" fill="#b0b0b0"/>
<rect x="78" y="59" width="1" height="1" fill="#b0b0b0"/>
<rect x="80" y="59" width="1" height="1" fill="#b0b0b0"/>
<rect x="82" y="59" width="1" height="1" fill="#b0b0b0"/>
<rect x="84" y="59" width="1" height="1" fill="#b0b0b0"/>
<rect x="86" y="59" width="1" height="1" fill="#b0b0b0"/>
<rect x="88" y="59" width="1" height="1" fill="#b0b0b0"/>
<rect x="90" y="59" width="1" height="1" fill="#b0b0b0"/>
<rect x="92" y="59" width="1" height="1" fill="#b0b0b0"/>
<rect x="77" y="60" width="1" height="1" fill="#b0b0b0"/>
<rect x="79" y="60" width="1" height="1" fill="#b0b0b0"/>
<rect x="81" y="60" width="1" height="1" fill="#b0b0b0"/>
<rect x="83" y="60" width="1" height="1" fill="#b0b0b0"/>
<rect x="85" y="60" width="1" height="1" fill="#b0b0b0"/>
<rect x="87" y="60" width="1" height="1" fill="#b0b0b0"/>
<rect x="89" y="60" width="1" height="1" fill="#b0b0b0"/>
<rect x="91" y="60" width="1" height="1" fill="#b0b0b0"/>
<rect x="93" y="60" width="1" height="1" fill="#b0b0b0"/>
<rect x="78" y="61" width="1" height="1" fill="#b0b0b0"/>
<rect x="80" y="61" width="1" height="1" fill="#b0b0b0"/>
<rect x="82" y="61" width="1" height="1" fill="#b0b0b0"/>
<rect x="84" y="61" width="1" height="1" fill="#b0b0b0"/>
<rect x="86" y="61" width="1" height="1" fill="#b0b0b0"/>
<rect x="88" y="61" width="1" height="1" fill="#b0b0b0"/>
<rect x="90" y="61" width="1" height="1" fill="#b0b0b0"/>
<rect x="92" y="61" width="1" height="1" fill="#b0b0b0"/>
<rect x="77" y="62" width="1" height="1" fill="#b0b0b0"/>
<rect x="79" y="62" width="1" height="1" fill="#b0b0b0"/>
<rect x="81" y="62" width="1" height="1" fill="#b0b0b0"/>
<rect x="83" y="62" width="1" height="1" fill="#b0b0b0"/>
<rect x="85" y="62" width="1" height="1" fill="#b0b0b0"/>
<rect x="87" y="62" width="1" height="1" fill="#b0b0b0"/>
<rect x="89" y="62" width="1" height="1" fill="#b0b0b0"/>
<rect x="91" y="62" width="1" height="1" fill="#b0b0b0"/>
<rect x="93" y="62" width="1" height="1" fill="#b0b0b0"/>
<rect x="78" y="63" width="1" height="1" fill="#b0b0b0"/>
<rect x="80" y="63" width="1" height="1" fill="#b0b0b0"/>
<rect x="82" y="63" width="1" height="1" fill="#b0b0b0"/>
<rect x="84" y="63" width="1" height="1" fill="#b0b0b0"/>
<rect x="86" y="63" width="1" height="1" fill="#b0b0b0"/>
<rect x="88" y="63" width="1" height="1" fill="#b0b0b0"/>
<rect x="90" y="63" width="1" height="1" fill="#b0b0b0"/>
<rect x="92" y="63" width="1" height="1" fill="#b0b0b0"/>
<rect x="77" y="64" width="1" height="1" fill="#b0b0b0"/>
<rect x="79" y="64" width="1" height="1" fill="#b0b0b0"/>
<rect x="81" y="64" width="1" height="1" fill="#b0b0b0"/>
<rect x="83" y="64" width="1" height="1" fill="#b0b0b0"/>
<rect x="85" y="64" width="1" height="1" fill="#b0b0b0"/>
<rect x="87" y="64" width="1" height="1" fill="#b0b0b0"/>
<rect x="89" y="64" width="1" height="1" fill="#b0b0b0"/>
<rect x="91" y="64" width="1" height="1" fill="#b0b0b0"/>
<rect x="93" y="64" width="1" height="1" fill="#b0b0b0"/>
<rect x="78" y="65" width="1" height="1" fill="#b0b0b0"/>
<rect x="80" y="65" width="1" height="1" fill="#b0b0b0"/>
<rect x="82" y="65" width="1" height="1" fill="#b0b0b0"/>
<rect x="84" y="65" width="1" height="1" fill="#b0b0b0"/>
<rect x="86" y="65" width="1" height="1" fill="#b0b0b0"/>
<rect x="88" y="65" width="1" height="1" fill="#b0b0b0"/>
<rect x="90" y="65" width="1" height="1" fill="#b0b0b0"/>
<rect x="92" y="65" width="1" height="1" fill="#b0b0b0"/>
<rect x="77" y="66" width="1" height="1" fill="#b0b0b0"/>
<rect x="79" y="66" width="1" height="1" fill="#b0b0b0"/>
<rect x="81" y="66" width="1" height="1" fill="#b0b0b0"/>
<rect x="83" y="66" width="1" height="1" fill="#b0b0b0"/>
<rect x="85" y="66" width="1" height="1" fill="#b0b0b0"/>
<rect x="87" y="66" width="1" height="1" fill="#b0b0b0"/>
<rect x="89" y="66" width="1" height="1" fill="#b0b0b0"/>
<rect x="91" y="66" width="1" height="1" fill="#b0b0b0"/>
<rect x="93" y="66" width="1" height="1" fill="#b0b0b0"/>
<rect x="78" y="67" width="1" height="1" fill="#b0b0b0"/>
<rect x="80" y="67" width="1" height="1" fill="#b0b0b0"/>
<rect x="82" y="67" width="1" height="1" fill="#b0b0b0"/>
<rect x="84" y="67" width="1" height="1" fill="#b0b0b0"/>
<rect x="86" y="67" width="1" height="1" fill="#b0b0b0"/>
<rect x="88" y="67" width="1" height="1" fill="#b0b0b0"/>
<rect x="90" y="67" width="1" height="1" fill="#b0b0b0"/>
<rect x="92" y="67" width="1" height="1" fill="#b0b0b0"/>
<rect x="77" y="68" width="1" height="1" fill="#b0b0b0"/>
<rect x="79" y="68" width="1" height="1" fill="#b0b0b0"/>
<rect x="81" y="68" width="1" height="1" fill="#b0b0b0"/>
<rect x="83" y="68" width="1" height="1" fill="#b0b0b0"/>
<rect x="85" y="68" width="1" height="1" fill="#b0b0b0"/>
<rect x="87" y="68" width="1" height="1" fill="#b0b0b0"/>
<rect x="89" y="68" width="1" height="1" fill="#b0b0b0"/>
<rect x="91" y="68" width="1" height="1" fill="#b0b0b0"/>
<rect x="93" y="68" width="1" height="1" fill="#b0b0b0"/>
<rect x="78" y="69" width="1" height="1" fill="#b0b0b0"/>
<rect x="80" y="69" width="1" height="1" fill="#b0b0b0"/>
<rect x="82" y="69" width="1" height="1" fill="#b0b0b0"/>
<rect x="84" y="69" width="1" height="1" fill="#b0b0b0"/>
<rect x="86" y="69" width="1" height="1" fill="#b0b0b0"/>
<rect x="88" y="69" width="1" height="1" fill="#b0b0b0"/>
<rect x="90" y="69" width="1" height="1" fill="#b0b0b0"/>
<rect x="92" y="69" width="1" height="1" fill="#b0b0b0"/>
<rect x="77" y="70" width="1" height="1" fill="#b0b0b0"/>
<rect x="79" y="70" width="1" height="1" fill="#b0b0b0"/>
<rect x="81" y="70" width="1" height="1" fill="#b0b0b0"/>
<rect x="83" y="70" width="1" height="1" fill="#b0b0b0"/>
<rect x="85" y="70" width="1" height="1" fill="#b0b0b0"/>
<rect x="87" y="70" width="1" height="1" fill="#b0b0b0"/>
<rect x="89" y="70" width="1" height="1" fill="#b0b0b0"/>
<rect x="91" y="70" width="1" height="1" fill="#b0b0b0"/>
<rect x="93" y="70" width="1" height="1" fill="#b0b0b0"/>
<rect x="78" y="71" width="1" height="1" fill="#b0b0b0"/>
<rect x="80" y="71" width="1" height="1" fill="#b0b0b0"/>
<rect x="82" y="71" width="1" height="1" fill="#b0b0b0"/>
<rect x="84" y="71" width="1" height="1" fill="#b0b0b0"/>
<rect x="86" y="71" width="1" height="1" fill="#b0b0b0"/>
<rect x="88" y="71" width="1" height="1" fill="#b0b0b0"/>
<rect x="90" y="71" width="1" height="1" fill="#b0b0b0"/>
<rect x="92" y="71" width="1" height="1" fill="#b0b0b0"/>
<rect x="77" y="72" width="1" height="1" fill="#b0b0b0"/>
<rect x="79" y="72" width="1" height="1" fill="#b0b0b0"/>
<rect x="81" y="72" width="1" height="1" fill="#b0b0b0"/>
<rect x="83" y="72" width="1" height="1" fill="#b0b0b0"/>
<rect x="85" y="72" width="1" height="1" fill="#b0b0b0"/>
<rect x="87" y="72" width="1" height="1" fill="#b0b0b0"/>
<rect x="89" y="72" width="1" height="1" fill="#b0b0b0"/>
<rect x="91" y="72" width="1" height="1" fill="#b0b0b0"/>
<rect x="93" y="72" width="1" height="1" fill="#b0b0b0"/>
<rect x="85" y="59" width="1" height="1" fill="#000"/>
<rect x="84" y="60" width="1" height="1" fill="#000"/>
<rect x="86" y="60" width="1" height="1" fill="#000"/>
<rect x="83" y="61" width="1" height="1" fill="#000"/>
<rect x="85" y="61" width="1" height="1" fill="#000"/>
<rect x="87" y="61" width="1" height="1" fill="#000"/>
<rect x="82" y="62" width="1" height="1" fill="#000"/>
<rect x="84" y="62" width="1" height="1" fill="#000"/>
<rect x="86" y="62" width="1" height="1" fill="#000"/>
<rect x="88" y="62" width="1" height="1" fill="#000"/>
<rect x="81" y="63" width="1" height="1" fill="#000"/>
<rect x="83" y="63" width="1" height="1" fill="#000"/>
<rect x="85" y="63" width="1" height="1" fill="#000"/>
<rect x="87" y="63" width="1" height="1" fill="#000"/>
<rect x="89" y="63" width="1" height="1" fill="#000"/>
<rect x="84" y="64" width="1" height="1" fill="#000"/>
<rect x="86" y="64" width="1" height="1" fill="#000"/>
<rect x="83" y="65" width="1" height="1" fill="#000"/>
<rect x="85" y="65" width="1" height="1" fill="#000"/>
<rect x="87" y="65" width="1" height="1" fill="#000"/>
<rect x="84" y="66" width="1" height="1" fill="#000"/>
<rect x="86" y="66" width="1" height="1" fill="#000"/>
<rect x="83" y="67" width="1" height="1" fill="#000"/>
<rect x="85" y="67" width="1" height="1" fill="#000"/>
<rect x="87" y="67" width="1" height="1" fill="#000"/>
<rect x="84" y="68" width="1" height="1" fill="#000"/>
<rect x="86" y="68" width="1" height="1" fill="#000"/>
<rect x="83" y="69" width="1" height="1" fill="#000"/>
<rect x="85" y="69" width="1" height="1" fill="#000"/>
<rect x="87" y="69" width="1" height="1" fill="#000"/>
<rect x="84" y="70" width="1" height="1" fill="#000"/>
<rect x="86" y="70" width="1" height="1" fill="#000"/>
<rect x="83" y="71" width="1" height="1" fill="#000"/>
<rect x="85" y="71" width="1" height="1" fill="#000"/>
<rect x="87" y="71" width="1" height="1" fill="#000"/>
<path d="M101.5 56.5L104.5 58.5L106.5 69.5H117.5" stroke="#000" fill="none" />
<rect x="105" y="59" width="13" height="1" fill="#000"/>
<rect x="105" y="67" width="13" height="1" fill="#000"/>
<rect x="105" y="59" width="1" height="9" fill="#000"/>
<rect x="117" y="59" width="1" height="9" fill="#000"/>
<rect x="109" y="59" width="1" height="9" fill="#000"/>
<rect x="113" y="59" width="1" height="9" fill="#000"/>
<rect x="105" y="63" width="13" height="1" fill="#000"/>
<rect x="106" y="70" width="3" height="2" fill="#000"/>
<rect x="114" y="70" width="3" height="2" fill="#000"/>
<rect x="128" y="59" width="1" height="1" fill="#0000ff"/>
<rect x="128" y="62" width="1" height="1" fill="#0000ff"/>
<rect x="128" y="65" width="1" height="1" fill="#0000ff"/>
<rect x="128" y="68" width="1" height="1" fill="#0000ff"/>
<rect x="128" y="71" width="1" height="1" fill="#0000ff"/>
<rect x="131" y="71" width="1" height="1" fill="#0000ff"/>
<rect x="134" y="71" width="1" height="1" fill="#0000ff"/>
<rect x="137" y="71" width="1" height="1" fill="#0000ff"/>
<rect x="140" y="71" width="1" height="1" fill="#0000ff"/>
<rect x="143" y="71" width="1" height="1" fill="#0000ff"/>
<rect x="130" y="61" width="5" height="2" fill="#ff0000"/>
<rect x="135" y="64" width="4" height="2" fill="#ff0000"/>
<rect x="139" y="67" width="5" height="2" fill="#ff0000"/>
<rect x="156" y="58" width="15" height="12" fill="#fff"/>
<rect x="156" y="58" width="15" height="1" fill="#000"/>
<rect x="156" y="69" width="15" height="1" fill="#000"/>
<rect x="156" y="58" width="1" height="12" fill="#000"/>
<rect x="170" y="58" width="1" height="12" fill="#000"/>
<rect x="157" y="58" width="14" height="2" fill="#000"/>
<rect x="156" y="68" width="15" height="2" fill="#000"/>
<rect x="163" y="58" width="1" height="12" fill="#000"/>
<rect x="158" y="61" width="1" height="1" fill="#000"/>
<rect x="160" y="61" width="2" height="1" fill="#000"/>
<rect x="165" y="61" width="1" height="1" fill="#000"/>
<rect x="167" y="61" width="2" height="1" fill="#000"/>
<rect x="158" y="63" width="1" height="1" fill="#000"/>
<rect x="160" y="63" width="2" height="1" fill="#000"/>
<rect x="165" y="63" width="1" height="1" fill="#000"/>
<rect x="167" y="63" width="2" height="1" fill="#000"/>
<rect x="158" y="65" width="1" height="1" fill="#000"/>
<rect x="160" y="65" width="2" height="1" fill="#000"/>
<rect x="165" y="65" width="1" height="1" fill="#000"/>
<rect x="167" y="65" width="2" height="1" fill="#000"/>
<rect x="158" y="67" width="1" height="1" fill="#000"/>
<rect x="160" y="67" width="2" height="1" fill="#000"/>
<rect x="165" y="67" width="1" height="1" fill="#000"/>
<rect x="167" y="67" width="2" height="1" fill="#000"/>
<rect x="180" y="56" width="1" height="1" fill="#b0b0b0"/>
<rect x="182" y="56" width="1" height="1" fill="#b0b0b0"/>
<rect x="184" y="56" width="1" height="1" fill="#b0b0b0"/>
<rect x="181" y="57" width="1" height="1" fill="#b0b0b0"/>
<rect x="183" y="57" width="1" height="1" fill="#b0b0b0"/>
<rect x="180" y="58" width="1" height="1" fill="#b0b0b0"/>
<rect x="182" y="58" width="1" height="1" fill="#b0b0b0"/>
<rect x="184" y="58" width="1" height="1" fill="#b0b0b0"/>
<rect x="181" y="59" width="1" height="1" fill="#b0b0b0"/>
<rect x="183" y="59" width="1" height="1" fill="#b0b0b0"/>
<path d="M180.5 60.5L182.5 62.5L184.5 60.5" stroke="#0000ff" fill="none" />
<path d="M180.5 63.5L182.5 65.5L184.5 63.5" stroke="#0000ff" fill="none" />
<path d="M180.5 66.5L182.5 68.5L184.5 66.5" stroke="#0000ff" fill="none" />
<path d="M180.5 69.5L182.5 71.5L184.5 69.5" stroke="#0000ff" fill="none" />
<rect x="186" y="57" width="1" height="1" fill="#000"/>
<rect x="188" y="57" width="1" height="1" fill="#000"/>
<rect x="190" y="57" width="1" height="1" fill="#000"/>
<rect x="192" y="57" width="1" height="1" fill="#000"/>
<rect x="194" y="57" width="1" height="1" fill="#000"/>
<rect x="196" y="57" width="1" height="1" fill="#000"/>
<rect x="186" y="59" width="1" height="1" fill="#000"/>
<rect x="188" y="59" width="1" height="1" fill="#000"/>
<rect x="190" y="59" width="1" height="1" fill="#000"/>
<rect x="192" y="59" width="1" height="1" fill="#000"/>
<rect x="194" y="59" width="1" height="1" fill="#000"/>
<rect x="196" y="59" width="1" height="1" fill="#000"/>
<rect x="186" y="61" width="1" height="1" fill="#000"/>
<rect x="188" y="61" width="1" height="1" fill="#000"/>
<rect x="190" y="61" width="1" height="1" fill="#000"/>
<rect x="192" y="61" width="1" height="1" fill="#000"/>
<rect x="194" y="61" width="1" height="1" fill="#000"/>
<rect x="196" y="61" width="1" height="1" fill="#000"/>
<rect x="186" y="63" width="1" height="1" fill="#000"/>
<rect x="188" y="63" width="1" height="1" fill="#000"/>
<rect x="190" y="63" width="1" height="1" fill="#000"/>
<rect x="192" y="63" width="1" height="1" fill="#000"/>
<rect x="194" y="63" width="1" height="1" fill="#000"/>
<rect x="196" y="63" width="1" height="1" fill="#000"/>
<rect x="186" y="65" width="1" height="1" fill="#000"/>
<rect x="188" y="65" width="1" height="1" fill="#000"/>
<rect x="190" y="65" width="1" height="1" fill="#000"/>
<rect x="192" y="65" width="1" height="1" fill="#000"/>
<rect x="194" y="65" width="1" height="1" fill="#000"/>
<rect x="196" y="65" width="1" height="1" fill="#000"/>
<rect x="186" y="67" width="1" height="1" fill="#000"/>
<rect x="188" y="67" width="1" height="1" fill="#000"/>
<rect x="190" y="67" width="1" height="1" fill="#000"/>
<rect x="192" y="67" width="1" height="1" fill="#000"/>
<rect x="194" y="67" width="1" height="1" fill="#000"/>
<rect x="196" y="67" width="1" height="1" fill="#000"/>
<rect x="186" y="69" width="1" height="1" fill="#000"/>
<rect x="188" y="69" width="1" height="1" fill="#000"/>
<rect x="190" y="69" width="1" height="1" fill="#000"/>
<rect x="192" y="69" width="1" height="1" fill="#000"/>
<rect x="194" y="69" width="1" height="1" fill="#000"/>
<rect x="196" y="69" width="1" height="1" fill="#000"/>
<rect x="186" y="71" width="1" height="1" fill="#000"/>
<rect x="188" y="71" width="1" height="1" fill="#000"/>
<rect x="190" y="71" width="1" height="1" fill="#000"/>
<rect x="192" y="71" width="1" height="1" fill="#000"/>
<rect x="194" y="71" width="1" height="1" fill="#000"/>
<rect x="196" y="71" width="1" height="1" fill="#000"/>
<rect x="189" y="60" width="4" height="10" fill="#80ffff"/>
<path d="M210.5 56.5H217.5L222.5 61.5V67.5L217.5 72.5H210.5L205.5 67.5V61.5Z" stroke="#000" fill="#0000ff" />
<path d="M209 58H216L219 61L217 65L213 63L211 60Z" stroke="none" fill="#00ff00" />
<path d="M206 62L210 63L212 67L209 69L206 66Z" stroke="none" fill="#00ff00" />
<rect x="218" y="64" width="4" height="4" fill="#00ff00"/>
<rect x="213" y="70" width="4" height="2" fill="#000080"/>
<path d="M233 64L239.5 57L246 64Z" stroke="none" fill="#800000" />
<path d="M232.5 64.5L239.5 57.5L246.5 64.5" stroke="#000" fill="none" />
<rect x="233" y="64" width="14" height="9" fill="#808080"/>
<rect x="233" y="64" width="14" height="1" fill="#000"/>
<rect x="233" y="72" width="14" height="1" fill="#000"/>
<rect x="233" y="64" width="1" height="9" fill="#000"/>
<rect x="246" y="64" width="1" height="9" fill="#000"/>
<rect x="236" y="65" width="8" height="4" fill="#00ffff"/>
<rect x="236" y="69" width="8" height="1" fill="#000080"/>
<rect x="245" y="61" width="7" height="3" fill="#800000"/>
<rect x="246" y="64" width="5" height="9" fill="#fff"/>
<rect x="245" y="61" width="7" height="1" fill="#000"/>
<rect x="231" y="73" width="21" height="2" fill="#008000"/>
<rect x="259" y="56" width="1" height="1" fill="#000"/>
<rect x="261" y="56" width="1" height="1" fill="#000"/>
<rect x="263" y="56" width="1" height="1" fill="#000"/>
<rect x="265" y="56" width="1" height="1" fill="#000"/>
<rect x="267" y="56" width="1" height="1" fill="#000"/>
<rect x="269" y="56" width="1" height="1" fill="#000"/>
<rect x="271" y="56" width="1" height="1" fill="#000"/>
<rect x="259" y="58" width="1" height="1" fill="#000"/>
<rect x="261" y="58" width="1" height="1" fill="#000"/>
<rect x="263" y="58" width="1" height="1" fill="#000"/>
<rect x="265" y="58" width="1" height="1" fill="#000"/>
<rect x="267" y="58" width="1" height="1" fill="#000"/>
<rect x="269" y="58" width="1" height="1" fill="#000"/>
<rect x="271" y="58" width="1" height="1" fill="#000"/>
<rect x="259" y="60" width="1" height="1" fill="#000"/>
<rect x="261" y="60" width="1" height="1" fill="#000"/>
<rect x="263" y="60" width="1" height="1" fill="#000"/>
<rect x="265" y="60" width="1" height="1" fill="#000"/>
<rect x="267" y="60" width="1" height="1" fill="#000"/>
<rect x="269" y="60" width="1" height="1" fill="#000"/>
<rect x="271" y="60" width="1" height="1" fill="#000"/>
<rect x="259" y="62" width="1" height="1" fill="#000"/>
<rect x="261" y="62" width="1" height="1" fill="#000"/>
<rect x="263" y="62" width="1" height="1" fill="#000"/>
<rect x="265" y="62" width="1" height="1" fill="#000"/>
<rect x="267" y="62" width="1" height="1" fill="#000"/>
<rect x="269" y="62" width="1" height="1" fill="#000"/>
<rect x="271" y="62" width="1" height="1" fill="#000"/>
<rect x="259" y="64" width="1" height="1" fill="#000"/>
<rect x="261" y="64" width="1" height="1" fill="#000"/>
<rect x="263" y="64" width="1" height="1" fill="#000"/>
<rect x="265" y="64" width="1" height="1" fill="#000"/>
<rect x="267" y="64" width="1" height="1" fill="#000"/>
<rect x="269" y="64" width="1" height="1" fill="#000"/>
<rect x="271" y="64" width="1" height="1" fill="#000"/>
<rect x="259" y="66" width="1" height="1" fill="#000"/>
<rect x="261" y="66" width="1" height="1" fill="#000"/>
<rect x="263" y="66" width="1" height="1" fill="#000"/>
<rect x="265" y="66" width="1" height="1" fill="#000"/>
<rect x="267" y="66" width="1" height="1" fill="#000"/>
<rect x="269" y="66" width="1" height="1" fill="#000"/>
<rect x="271" y="66" width="1" height="1" fill="#000"/>
<rect x="259" y="68" width="1" height="1" fill="#000"/>
<rect x="261" y="68" width="1" height="1" fill="#000"/>
<rect x="263" y="68" width="1" height="1" fill="#000"/>
<rect x="265" y="68" width="1" height="1" fill="#000"/>
<rect x="267" y="68" width="1" height="1" fill="#000"/>
<rect x="269" y="68" width="1" height="1" fill="#000"/>
<rect x="271" y="68" width="1" height="1" fill="#000"/>
<rect x="259" y="70" width="1" height="1" fill="#000"/>
<rect x="261" y="70" width="1" height="1" fill="#000"/>
<rect x="263" y="70" width="1" height="1" fill="#000"/>
<rect x="265" y="70" width="1" height="1" fill="#000"/>
<rect x="267" y="70" width="1" height="1" fill="#000"/>
<rect x="269" y="70" width="1" height="1" fill="#000"/>
<rect x="271" y="70" width="1" height="1" fill="#000"/>
<rect x="262" y="59" width="8" height="12" fill="#f0f0f0"/>
<path d="M262.5 61.5L265.5 59.5M262.5 63.5L268.5 58.5" stroke="#ffff00" fill="none" />
<path d="M263.5 63.5L268.5 59.5" stroke="#ff0000" fill="none" />
<rect x="262" y="65" width="2" height="1" fill="#0000ff"/>
<rect x="263" y="67" width="2" height="1" fill="#0000ff"/>
<rect x="264" y="69" width="2" height="1" fill="#0000ff"/>
<rect x="262" y="69" width="2" height="1" fill="#0000ff"/>
<rect x="266" y="68" width="2" height="1" fill="#ff0000"/>
<rect x="268" y="67" width="2" height="1" fill="#ff0000"/>
<rect x="267" y="70" width="2" height="1" fill="#ff0000"/>
<rect x="268" y="61" width="1" height="1" fill="#008000"/>
<rect x="270" y="63" width="1" height="1" fill="#008000"/>
<rect x="268" y="65" width="1" height="1" fill="#008000"/>
<rect x="270" y="67" width="1" height="1" fill="#008000"/>
<rect x="269" y="69" width="1" height="1" fill="#008000"/>
<rect x="284" y="56" width="1" height="1" fill="#c8c8c8"/>
<rect x="286" y="56" width="1" height="1" fill="#c8c8c8"/>
<rect x="288" y="56" width="1" height="1" fill="#c8c8c8"/>
<rect x="290" y="56" width="1" height="1" fill="#c8c8c8"/>
<rect x="292" y="56" width="1" height="1" fill="#c8c8c8"/>
<rect x="294" y="56" width="1" height="1" fill="#c8c8c8"/>
<rect x="296" y="56" width="1" height="1" fill="#c8c8c8"/>
<rect x="298" y="56" width="1" height="1" fill="#c8c8c8"/>
<rect x="300" y="56" width="1" height="1" fill="#c8c8c8"/>
<rect x="285" y="57" width="1" height="1" fill="#c8c8c8"/>
<rect x="287" y="57" width="1" height="1" fill="#c8c8c8"/>
<rect x="289" y="57" width="1" height="1" fill="#c8c8c8"/>
<rect x="291" y="57" width="1" height="1" fill="#c8c8c8"/>
<rect x="293" y="57" width="1" height="1" fill="#c8c8c8"/>
<rect x="295" y="57" width="1" height="1" fill="#c8c8c8"/>
<rect x="297" y="57" width="1" height="1" fill="#c8c8c8"/>
<rect x="299" y="57" width="1" height="1" fill="#c8c8c8"/>
<rect x="284" y="58" width="1" height="1" fill="#c8c8c8"/>
<rect x="286" y="58" width="1" height="1" fill="#c8c8c8"/>
<rect x="288" y="58" width="1" height="1" fill="#c8c8c8"/>
<rect x="290" y="58" width="1" height="1" fill="#c8c8c8"/>
<rect x="292" y="58" width="1" height="1" fill="#c8c8c8"/>
<rect x="294" y="58" width="1" height="1" fill="#c8c8c8"/>
<rect x="296" y="58" width="1" height="1" fill="#c8c8c8"/>
<rect x="298" y="58" width="1" height="1" fill="#c8c8c8"/>
<rect x="300" y="58" width="1" height="1" fill="#c8c8c8"/>
<rect x="285" y="59" width="1" height="1" fill="#c8c8c8"/>
<rect x="287" y="59" width="1" height="1" fill="#c8c8c8"/>
<rect x="289" y="59" width="1" height="1" fill="#c8c8c8"/>
<rect x="291" y="59" width="1" height="1" fill="#c8c8c8"/>
<rect x="293" y="59" width="1" height="1" fill="#c8c8c8"/>
<rect x="295" y="59" width="1" height="1" fill="#c8c8c8"/>
<rect x="297" y="59" width="1" height="1" fill="#c8c8c8"/>
<rect x="299" y="59" width="1" height="1" fill="#c8c8c8"/>
<rect x="284" y="60" width="1" height="1" fill="#c8c8c8"/>
<rect x="286" y="60" width="1" height="1" fill="#c8c8c8"/>
<rect x="288" y="60" width="1" height="1" fill="#c8c8c8"/>
<rect x="290" y="60" width="1" height="1" fill="#c8c8c8"/>
<rect x="292" y="60" width="1" height="1" fill="#c8c8c8"/>
<rect x="294" y="60" width="1" height="1" fill="#c8c8c8"/>
<rect x="296" y="60" width="1" height="1" fill="#c8c8c8"/>
<rect x="298" y="60" width="1" height="1" fill="#c8c8c8"/>
<rect x="300" y="60" width="1" height="1" fill="#c8c8c8"/>
<rect x="285" y="61" width="1" height="1" fill="#c8c8c8"/>
<rect x="287" y="61" width="1" height="1" fill="#c8c8c8"/>
<rect x="289" y="61" width="1" height="1" fill="#c8c8c8"/>
<rect x="291" y="61" width="1" height="1" fill="#c8c8c8"/>
<rect x="293" y="61" width="1" height="1" fill="#c8c8c8"/>
<rect x="295" y="61" width="1" height="1" fill="#c8c8c8"/>
<rect x="297" y="61" width="1" height="1" fill="#c8c8c8"/>
<rect x="299" y="61" width="1" height="1" fill="#c8c8c8"/>
<rect x="284" y="62" width="1" height="1" fill="#c8c8c8"/>
<rect x="286" y="62" width="1" height="1" fill="#c8c8c8"/>
<rect x="288" y="62" width="1" height="1" fill="#c8c8c8"/>
<rect x="290" y="62" width="1" height="1" fill="#c8c8c8"/>
<rect x="292" y="62" width="1" height="1" fill="#c8c8c8"/>
<rect x="294" y="62" width="1" height="1" fill="#c8c8c8"/>
<rect x="296" y="62" width="1" height="1" fill="#c8c8c8"/>
<rect x="298" y="62" width="1" height="1" fill="#c8c8c8"/>
<rect x="300" y="62" width="1" height="1" fill="#c8c8c8"/>
<rect x="285" y="63" width="1" height="1" fill="#c8c8c8"/>
<rect x="287" y="63" width="1" height="1" fill="#c8c8c8"/>
<rect x="289" y="63" width="1" height="1" fill="#c8c8c8"/>
<rect x="291" y="63" width="1" height="1" fill="#c8c8c8"/>
<rect x="293" y="63" width="1" height="1" fill="#c8c8c8"/>
<rect x="295" y="63" width="1" height="1" fill="#c8c8c8"/>
<rect x="297" y="63" width="1" height="1" fill="#c8c8c8"/>
<rect x="299" y="63" width="1" height="1" fill="#c8c8c8"/>
<rect x="284" y="64" width="1" height="1" fill="#c8c8c8"/>
<rect x="286" y="64" width="1" height="1" fill="#c8c8c8"/>
<rect x="288" y="64" width="1" height="1" fill="#c8c8c8"/>
<rect x="290" y="64" width="1" height="1" fill="#c8c8c8"/>
<rect x="292" y="64" width="1" height="1" fill="#c8c8c8"/>
<rect x="294" y="64" width="1" height="1" fill="#c8c8c8"/>
<rect x="296" y="64" width="1" height="1" fill="#c8c8c8"/>
<rect x="298" y="64" width="1" height="1" fill="#c8c8c8"/>
<rect x="300" y="64" width="1" height="1" fill="#c8c8c8"/>
<rect x="285" y="65" width="1" height="1" fill="#c8c8c8"/>
<rect x="287" y="65" width="1" height="1" fill="#c8c8c8"/>
<rect x="289" y="65" width="1" height="1" fill="#c8c8c8"/>
<rect x="291" y="65" width="1" height="1" fill="#c8c8c8"/>
<rect x="293" y="65" width="1" height="1" fill="#c8c8c8"/>
<rect x="295" y="65" width="1" height="1" fill="#c8c8c8"/>
<rect x="297" y="65" width="1" height="1" fill="#c8c8c8"/>
<rect x="299" y="65" width="1" height="1" fill="#c8c8c8"/>
<rect x="284" y="66" width="1" height="1" fill="#c8c8c8"/>
<rect x="286" y="66" width="1" height="1" fill="#c8c8c8"/>
<rect x="288" y="66" width="1" height="1" fill="#c8c8c8"/>
<rect x="290" y="66" width="1" height="1" fill="#c8c8c8"/>
<rect x="292" y="66" width="1" height="1" fill="#c8c8c8"/>
<rect x="294" y="66" width="1" height="1" fill="#c8c8c8"/>
<rect x="296" y="66" width="1" height="1" fill="#c8c8c8"/>
<rect x="298" y="66" width="1" height="1" fill="#c8c8c8"/>
<rect x="300" y="66" width="1" height="1" fill="#c8c8c8"/>
<rect x="285" y="67" width="1" height="1" fill="#c8c8c8"/>
<rect x="287" y="67" width="1" height="1" fill="#c8c8c8"/>
<rect x="289" y="67" width="1" height="1" fill="#c8c8c8"/>
<rect x="291" y="67" width="1" height="1" fill="#c8c8c8"/>
<rect x="293" y="67" width="1" height="1" fill="#c8c8c8"/>
<rect x="295" y="67" width="1" height="1" fill="#c8c8c8"/>
<rect x="297" y="67" width="1" height="1" fill="#c8c8c8"/>
<rect x="299" y="67" width="1" height="1" fill="#c8c8c8"/>
<rect x="284" y="68" width="1" height="1" fill="#c8c8c8"/>
<rect x="286" y="68" width="1" height="1" fill="#c8c8c8"/>
<rect x="288" y="68" width="1" height="1" fill="#c8c8c8"/>
<rect x="290" y="68" width="1" height="1" fill="#c8c8c8"/>
<rect x="292" y="68" width="1" height="1" fill="#c8c8c8"/>
<rect x="294" y="68" width="1" height="1" fill="#c8c8c8"/>
<rect x="296" y="68" width="1" height="1" fill="#c8c8c8"/>
<rect x="298" y="68" width="1" height="1" fill="#c8c8c8"/>
<rect x="300" y="68" width="1" height="1" fill="#c8c8c8"/>
<rect x="285" y="69" width="1" height="1" fill="#c8c8c8"/>
<rect x="287" y="69" width="1" height="1" fill="#c8c8c8"/>
<rect x="289" y="69" width="1" height="1" fill="#c8c8c8"/>
<rect x="291" y="69" width="1" height="1" fill="#c8c8c8"/>
<rect x="293" y="69" width="1" height="1" fill="#c8c8c8"/>
<rect x="295" y="69" width="1" height="1" fill="#c8c8c8"/>
<rect x="297" y="69" width="1" height="1" fill="#c8c8c8"/>
<rect x="299" y="69" width="1" height="1" fill="#c8c8c8"/>
<rect x="284" y="70" width="1" height="1" fill="#c8c8c8"/>
<rect x="286" y="70" width="1" height="1" fill="#c8c8c8"/>
<rect x="288" y="70" width="1" height="1" fill="#c8c8c8"/>
<rect x="290" y="70" width="1" height="1" fill="#c8c8c8"/>
<rect x="292" y="70" width="1" height="1" fill="#c8c8c8"/>
<rect x="294" y="70" width="1" height="1" fill="#c8c8c8"/>
<rect x="296" y="70" width="1" height="1" fill="#c8c8c8"/>
<rect x="298" y="70" width="1" height="1" fill="#c8c8c8"/>
<rect x="300" y="70" width="1" height="1" fill="#c8c8c8"/>
<rect x="285" y="71" width="1" height="1" fill="#c8c8c8"/>
<rect x="287" y="71" width="1" height="1" fill="#c8c8c8"/>
<rect x="289" y="71" width="1" height="1" fill="#c8c8c8"/>
<rect x="291" y="71" width="1" height="1" fill="#c8c8c8"/>
<rect x="293" y="71" width="1" height="1" fill="#c8c8c8"/>
<rect x="295" y="71" width="1" height="1" fill="#c8c8c8"/>
<rect x="297" y="71" width="1" height="1" fill="#c8c8c8"/>
<rect x="299" y="71" width="1" height="1" fill="#c8c8c8"/>
<rect x="284" y="72" width="1" height="1" fill="#c8c8c8"/>
<rect x="286" y="72" width="1" height="1" fill="#c8c8c8"/>
<rect x="288" y="72" width="1" height="1" fill="#c8c8c8"/>
<rect x="290" y="72" width="1" height="1" fill="#c8c8c8"/>
<rect x="292" y="72" width="1" height="1" fill="#c8c8c8"/>
<rect x="294" y="72" width="1" height="1" fill="#c8c8c8"/>
<rect x="296" y="72" width="1" height="1" fill="#c8c8c8"/>
<rect x="298" y="72" width="1" height="1" fill="#c8c8c8"/>
<rect x="300" y="72" width="1" height="1" fill="#c8c8c8"/>
<rect x="293" y="60" width="1" height="1" fill="#000080"/>
<rect x="292" y="62" width="1" height="1" fill="#000080"/>
<rect x="290" y="63" width="1" height="1" fill="#000080"/>
<rect x="287" y="62" width="1" height="1" fill="#000080"/>
<rect x="287" y="60" width="1" height="1" fill="#000080"/>
<rect x="287" y="57" width="1" height="1" fill="#000080"/>
<rect x="290" y="57" width="1" height="1" fill="#000080"/>
<rect x="292" y="57" width="1" height="1" fill="#000080"/>
<rect x="290" y="67" width="1" height="1" fill="#ff0000"/>
<rect x="289" y="69" width="1" height="1" fill="#ff0000"/>
<rect x="287" y="70" width="1" height="1" fill="#ff0000"/>
<rect x="284" y="69" width="1" height="1" fill="#ff0000"/>
<rect x="284" y="67" width="1" height="1" fill="#ff0000"/>
<rect x="284" y="64" width="1" height="1" fill="#ff0000"/>
<rect x="287" y="64" width="1" height="1" fill="#ff0000"/>
<rect x="289" y="64" width="1" height="1" fill="#ff0000"/>
<rect x="297" y="67" width="1" height="1" fill="#00c000"/>
<rect x="296" y="69" width="1" height="1" fill="#00c000"/>
<rect x="294" y="70" width="1" height="1" fill="#00c000"/>
<rect x="291" y="69" width="1" height="1" fill="#00c000"/>
<rect x="291" y="67" width="1" height="1" fill="#00c000"/>
<rect x="291" y="64" width="1" height="1" fill="#00c000"/>
<rect x="294" y="64" width="1" height="1" fill="#00c000"/>
<rect x="296" y="64" width="1" height="1" fill="#00c000"/>
<path d="M294.5 62.5L297.5 59.5" stroke="#ffff00" fill="none" />
<path d="M295.5 63.5L299.5 59.5" stroke="#ff0000" fill="none" />
<rect x="309" y="56" width="1" height="1" fill="#c8c8c8"/>
<rect x="311" y="56" width="1" height="1" fill="#c8c8c8"/>
<rect x="313" y="56" width="1" height="1" fill="#c8c8c8"/>
<rect x="315" y="56" width="1" height="1" fill="#c8c8c8"/>
<rect x="317" y="56" width="1" height="1" fill="#c8c8c8"/>
<rect x="319" y="56" width="1" height="1" fill="#c8c8c8"/>
<rect x="321" y="56" width="1" height="1" fill="#c8c8c8"/>
<rect x="323" y="56" width="1" height="1" fill="#c8c8c8"/>
<rect x="325" y="56" width="1" height="1" fill="#c8c8c8"/>
<rect x="310" y="57" width="1" height="1" fill="#c8c8c8"/>
<rect x="312" y="57" width="1" height="1" fill="#c8c8c8"/>
<rect x="314" y="57" width="1" height="1" fill="#c8c8c8"/>
<rect x="316" y="57" width="1" height="1" fill="#c8c8c8"/>
<rect x="318" y="57" width="1" height="1" fill="#c8c8c8"/>
<rect x="320" y="57" width="1" height="1" fill="#c8c8c8"/>
<rect x="322" y="57" width="1" height="1" fill="#c8c8c8"/>
<rect x="324" y="57" width="1" height="1" fill="#c8c8c8"/>
<rect x="309" y="58" width="1" height="1" fill="#c8c8c8"/>
<rect x="311" y="58" width="1" height="1" fill="#c8c8c8"/>
<rect x="313" y="58" width="1" height="1" fill="#c8c8c8"/>
<rect x="315" y="58" width="1" height="1" fill="#c8c8c8"/>
<rect x="317" y="58" width="1" height="1" fill="#c8c8c8"/>
<rect x="319" y="58" width="1" height="1" fill="#c8c8c8"/>
<rect x="321" y="58" width="1" height="1" fill="#c8c8c8"/>
<rect x="323" y="58" width="1" height="1" fill="#c8c8c8"/>
<rect x="325" y="58" width="1" height="1" fill="#c8c8c8"/>
<rect x="310" y="59" width="1" height="1" fill="#c8c8c8"/>
<rect x="312" y="59" width="1" height="1" fill="#c8c8c8"/>
<rect x="314" y="59" width="1" height="1" fill="#c8c8c8"/>
<rect x="316" y="59" width="1" height="1" fill="#c8c8c8"/>
<rect x="318" y="59" width="1" height="1" fill="#c8c8c8"/>
<rect x="320" y="59" width="1" height="1" fill="#c8c8c8"/>
<rect x="322" y="59" width="1" height="1" fill="#c8c8c8"/>
<rect x="324" y="59" width="1" height="1" fill="#c8c8c8"/>
<rect x="309" y="60" width="1" height="1" fill="#c8c8c8"/>
<rect x="311" y="60" width="1" height="1" fill="#c8c8c8"/>
<rect x="313" y="60" width="1" height="1" fill="#c8c8c8"/>
<rect x="315" y="60" width="1" height="1" fill="#c8c8c8"/>
<rect x="317" y="60" width="1" height="1" fill="#c8c8c8"/>
<rect x="319" y="60" width="1" height="1" fill="#c8c8c8"/>
<rect x="321" y="60" width="1" height="1" fill="#c8c8c8"/>
<rect x="323" y="60" width="1" height="1" fill="#c8c8c8"/>
<rect x="325" y="60" width="1" height="1" fill="#c8c8c8"/>
<rect x="310" y="61" width="1" height="1" fill="#c8c8c8"/>
<rect x="312" y="61" width="1" height="1" fill="#c8c8c8"/>
<rect x="314" y="61" width="1" height="1" fill="#c8c8c8"/>
<rect x="316" y="61" width="1" height="1" fill="#c8c8c8"/>
<rect x="318" y="61" width="1" height="1" fill="#c8c8c8"/>
<rect x="320" y="61" width="1" height="1" fill="#c8c8c8"/>
<rect x="322" y="61" width="1" height="1" fill="#c8c8c8"/>
<rect x="324" y="61" width="1" height="1" fill="#c8c8c8"/>
<rect x="309" y="62" width="1" height="1" fill="#c8c8c8"/>
<rect x="311" y="62" width="1" height="1" fill="#c8c8c8"/>
<rect x="313" y="62" width="1" height="1" fill="#c8c8c8"/>
<rect x="315" y="62" width="1" height="1" fill="#c8c8c8"/>
<rect x="317" y="62" width="1" height="1" fill="#c8c8c8"/>
<rect x="319" y="62" width="1" height="1" fill="#c8c8c8"/>
<rect x="321" y="62" width="1" height="1" fill="#c8c8c8"/>
<rect x="323" y="62" width="1" height="1" fill="#c8c8c8"/>
<rect x="325" y="62" width="1" height="1" fill="#c8c8c8"/>
<rect x="310" y="63" width="1" height="1" fill="#c8c8c8"/>
<rect x="312" y="63" width="1" height="1" fill="#c8c8c8"/>
<rect x="314" y="63" width="1" height="1" fill="#c8c8c8"/>
<rect x="316" y="63" width="1" height="1" fill="#c8c8c8"/>
<rect x="318" y="63" width="1" height="1" fill="#c8c8c8"/>
<rect x="320" y="63" width="1" height="1" fill="#c8c8c8"/>
<rect x="322" y="63" width="1" height="1" fill="#c8c8c8"/>
<rect x="324" y="63" width="1" height="1" fill="#c8c8c8"/>
<rect x="309" y="64" width="1" height="1" fill="#c8c8c8"/>
<rect x="311" y="64" width="1" height="1" fill="#c8c8c8"/>
<rect x="313" y="64" width="1" height="1" fill="#c8c8c8"/>
<rect x="315" y="64" width="1" height="1" fill="#c8c8c8"/>
<rect x="317" y="64" width="1" height="1" fill="#c8c8c8"/>
<rect x="319" y="64" width="1" height="1" fill="#c8c8c8"/>
<rect x="321" y="64" width="1" height="1" fill="#c8c8c8"/>
<rect x="323" y="64" width="1" height="1" fill="#c8c8c8"/>
<rect x="325" y="64" width="1" height="1" fill="#c8c8c8"/>
<rect x="310" y="65" width="1" height="1" fill="#c8c8c8"/>
<rect x="312" y="65" width="1" height="1" fill="#c8c8c8"/>
<rect x="314" y="65" width="1" height="1" fill="#c8c8c8"/>
<rect x="316" y="65" width="1" height="1" fill="#c8c8c8"/>
<rect x="318" y="65" width="1" height="1" fill="#c8c8c8"/>
<rect x="320" y="65" width="1" height="1" fill="#c8c8c8"/>
<rect x="322" y="65" width="1" height="1" fill="#c8c8c8"/>
<rect x="324" y="65" width="1" height="1" fill="#c8c8c8"/>
<rect x="309" y="66" width="1" height="1" fill="#c8c8c8"/>
<rect x="311" y="66" width="1" height="1" fill="#c8c8c8"/>
<rect x="313" y="66" width="1" height="1" fill="#c8c8c8"/>
<rect x="315" y="66" width="1" height="1" fill="#c8c8c8"/>
<rect x="317" y="66" width="1" height="1" fill="#c8c8c8"/>
<rect x="319" y="66" width="1" height="1" fill="#c8c8c8"/>
<rect x="321" y="66" width="1" height="1" fill="#c8c8c8"/>
<rect x="323" y="66" width="1" height="1" fill="#c8c8c8"/>
<rect x="325" y="66" width="1" height="1" fill="#c8c8c8"/>
<rect x="310" y="67" width="1" height="1" fill="#c8c8c8"/>
<rect x="312" y="67" width="1" height="1" fill="#c8c8c8"/>
<rect x="314" y="67" width="1" height="1" fill="#c8c8c8"/>
<rect x="316" y="67" width="1" height="1" fill="#c8c8c8"/>
<rect x="318" y="67" width="1" height="1" fill="#c8c8c8"/>
<rect x="320" y="67" width="1" height="1" fill="#c8c8c8"/>
<rect x="322" y="67" width="1" height="1" fill="#c8c8c8"/>
<rect x="324" y="67" width="1" height="1" fill="#c8c8c8"/>
<rect x="309" y="68" width="1" height="1" fill="#c8c8c8"/>
<rect x="311" y="68" width="1" height="1" fill="#c8c8c8"/>
<rect x="313" y="68" width="1" height="1" fill="#c8c8c8"/>
<rect x="315" y="68" width="1" height="1" fill="#c8c8c8"/>
<rect x="317" y="68" width="1" height="1" fill="#c8c8c8"/>
<rect x="319" y="68" width="1" height="1" fill="#c8c8c8"/>
<rect x="321" y="68" width="1" height="1" fill="#c8c8c8"/>
<rect x="323" y="68" width="1" height="1" fill="#c8c8c8"/>
<rect x="325" y="68" width="1" height="1" fill="#c8c8c8"/>
<rect x="310" y="69" width="1" height="1" fill="#c8c8c8"/>
<rect x="312" y="69" width="1" height="1" fill="#c8c8c8"/>
<rect x="314" y="69" width="1" height="1" fill="#c8c8c8"/>
<rect x="316" y="69" width="1" height="1" fill="#c8c8c8"/>
<rect x="318" y="69" width="1" height="1" fill="#c8c8c8"/>
<rect x="320" y="69" width="1" height="1" fill="#c8c8c8"/>
<rect x="322" y="69" width="1" height="1" fill="#c8c8c8"/>
<rect x="324" y="69" width="1" height="1" fill="#c8c8c8"/>
<rect x="309" y="70" width="1" height="1" fill="#c8c8c8"/>
<rect x="311" y="70" width="1" height="1" fill="#c8c8c8"/>
<rect x="313" y="70" width="1" height="1" fill="#c8c8c8"/>
<rect x="315" y="70" width="1" height="1" fill="#c8c8c8"/>
<rect x="317" y="70" width="1" height="1" fill="#c8c8c8"/>
<rect x="319" y="70" width="1" height="1" fill="#c8c8c8"/>
<rect x="321" y="70" width="1" height="1" fill="#c8c8c8"/>
<rect x="323" y="70" width="1" height="1" fill="#c8c8c8"/>
<rect x="325" y="70" width="1" height="1" fill="#c8c8c8"/>
<rect x="310" y="71" width="1" height="1" fill="#c8c8c8"/>
<rect x="312" y="71" width="1" height="1" fill="#c8c8c8"/>
<rect x="314" y="71" width="1" height="1" fill="#c8c8c8"/>
<rect x="316" y="71" width="1" height="1" fill="#c8c8c8"/>
<rect x="318" y="71" width="1" height="1" fill="#c8c8c8"/>
<rect x="320" y="71" width="1" height="1" fill="#c8c8c8"/>
<rect x="322" y="71" width="1" height="1" fill="#c8c8c8"/>
<rect x="324" y="71" width="1" height="1" fill="#c8c8c8"/>
<rect x="309" y="72" width="1" height="1" fill="#c8c8c8"/>
<rect x="311" y="72" width="1" height="1" fill="#c8c8c8"/>
<rect x="313" y="72" width="1" height="1" fill="#c8c8c8"/>
<rect x="315" y="72" width="1" height="1" fill="#c8c8c8"/>
<rect x="317" y="72" width="1" height="1" fill="#c8c8c8"/>
<rect x="319" y="72" width="1" height="1" fill="#c8c8c8"/>
<rect x="321" y="72" width="1" height="1" fill="#c8c8c8"/>
<rect x="323" y="72" width="1" height="1" fill="#c8c8c8"/>
<rect x="325" y="72" width="1" height="1" fill="#c8c8c8"/>
<rect x="314" y="56" width="1" height="1" fill="#000"/>
<rect x="316" y="56" width="1" height="1" fill="#000"/>
<rect x="318" y="56" width="1" height="1" fill="#000"/>
<rect x="320" y="56" width="1" height="1" fill="#000"/>
<rect x="314" y="58" width="1" height="1" fill="#000"/>
<rect x="316" y="58" width="1" height="1" fill="#000"/>
<rect x="318" y="58" width="1" height="1" fill="#000"/>
<rect x="320" y="58" width="1" height="1" fill="#000"/>
<rect x="314" y="60" width="1" height="1" fill="#000"/>
<rect x="316" y="60" width="1" height="1" fill="#000"/>
<rect x="318" y="60" width="1" height="1" fill="#000"/>
<rect x="320" y="60" width="1" height="1" fill="#000"/>
<path d="M310.5 65.5L315.5 60.5M325.5 65.5L320.5 60.5" stroke="#000" fill="none" />
<rect x="309" y="66" width="1" height="1" fill="#000"/>
<rect x="311" y="66" width="1" height="1" fill="#000"/>
<rect x="313" y="66" width="1" height="1" fill="#000"/>
<rect x="315" y="66" width="1" height="1" fill="#000"/>
<rect x="317" y="66" width="1" height="1" fill="#000"/>
<rect x="319" y="66" width="1" height="1" fill="#000"/>
<rect x="321" y="66" width="1" height="1" fill="#000"/>
<rect x="323" y="66" width="1" height="1" fill="#000"/>
<rect x="325" y="66" width="1" height="1" fill="#000"/>
<rect x="309" y="68" width="1" height="1" fill="#000"/>
<rect x="311" y="68" width="1" height="1" fill="#000"/>
<rect x="313" y="68" width="1" height="1" fill="#000"/>
<rect x="315" y="68" width="1" height="1" fill="#000"/>
<rect x="317" y="68" width="1" height="1" fill="#000"/>
<rect x="319" y="68" width="1" height="1" fill="#000"/>
<rect x="321" y="68" width="1" height="1" fill="#000"/>
<rect x="323" y="68" width="1" height="1" fill="#000"/>
<rect x="325" y="68" width="1" height="1" fill="#000"/>
<rect x="309" y="70" width="1" height="1" fill="#000"/>
<rect x="311" y="70" width="1" height="1" fill="#000"/>
<rect x="313" y="70" width="1" height="1" fill="#000"/>
<rect x="315" y="70" width="1" height="1" fill="#000"/>
<rect x="317" y="70" width="1" height="1" fill="#000"/>
<rect x="319" y="70" width="1" height="1" fill="#000"/>
<rect x="321" y="70" width="1" height="1" fill="#000"/>
<rect x="323" y="70" width="1" height="1" fill="#000"/>
<rect x="325" y="70" width="1" height="1" fill="#000"/>
<rect x="309" y="72" width="1" height="1" fill="#000"/>
<rect x="311" y="72" width="1" height="1" fill="#000"/>
<rect x="313" y="72" width="1" height="1" fill="#000"/>
<rect x="315" y="72" width="1" height="1" fill="#000"/>
<rect x="317" y="72" width="1" height="1" fill="#000"/>
<rect x="319" y="72" width="1" height="1" fill="#000"/>
<rect x="321" y="72" width="1" height="1" fill="#000"/>
<rect x="323" y="72" width="1" height="1" fill="#000"/>
<rect x="325" y="72" width="1" height="1" fill="#000"/>
<rect x="316" y="59" width="3" height="2" fill="#00e0e0"/>
<rect x="311" y="68" width="3" height="3" fill="#00e0e0"/>
<rect x="320" y="68" width="3" height="3" fill="#00e0e0"/>
<rect x="335" y="57" width="1" height="1" fill="#000"/>
<rect x="337" y="57" width="1" height="1" fill="#000"/>
<rect x="339" y="57" width="1" height="1" fill="#000"/>
<rect x="341" y="57" width="1" height="1" fill="#000"/>
<rect x="343" y="57" width="1" height="1" fill="#000"/>
<rect x="345" y="57" width="1" height="1" fill="#000"/>
<rect x="347" y="57" width="1" height="1" fill="#000"/>
<rect x="349" y="57" width="1" height="1" fill="#000"/>
<rect x="335" y="59" width="1" height="1" fill="#000"/>
<rect x="337" y="59" width="1" height="1" fill="#000"/>
<rect x="339" y="59" width="1" height="1" fill="#000"/>
<rect x="341" y="59" width="1" height="1" fill="#000"/>
<rect x="343" y="59" width="1" height="1" fill="#000"/>
<rect x="345" y="59" width="1" height="1" fill="#000"/>
<rect x="347" y="59" width="1" height="1" fill="#000"/>
<rect x="349" y="59" width="1" height="1" fill="#000"/>
<rect x="335" y="61" width="1" height="1" fill="#000"/>
<rect x="337" y="61" width="1" height="1" fill="#000"/>
<rect x="339" y="61" width="1" height="1" fill="#000"/>
<rect x="341" y="61" width="1" height="1" fill="#000"/>
<rect x="343" y="61" width="1" height="1" fill="#000"/>
<rect x="345" y="61" width="1" height="1" fill="#000"/>
<rect x="347" y="61" width="1" height="1" fill="#000"/>
<rect x="349" y="61" width="1" height="1" fill="#000"/>
<rect x="335" y="63" width="1" height="1" fill="#000"/>
<rect x="337" y="63" width="1" height="1" fill="#000"/>
<rect x="339" y="63" width="1" height="1" fill="#000"/>
<rect x="341" y="63" width="1" height="1" fill="#000"/>
<rect x="343" y="63" width="1" height="1" fill="#000"/>
<rect x="345" y="63" width="1" height="1" fill="#000"/>
<rect x="347" y="63" width="1" height="1" fill="#000"/>
<rect x="349" y="63" width="1" height="1" fill="#000"/>
<rect x="335" y="65" width="1" height="1" fill="#000"/>
<rect x="337" y="65" width="1" height="1" fill="#000"/>
<rect x="339" y="65" width="1" height="1" fill="#000"/>
<rect x="341" y="65" width="1" height="1" fill="#000"/>
<rect x="343" y="65" width="1" height="1" fill="#000"/>
<rect x="345" y="65" width="1" height="1" fill="#000"/>
<rect x="347" y="65" width="1" height="1" fill="#000"/>
<rect x="349" y="65" width="1" height="1" fill="#000"/>
<rect x="335" y="67" width="1" height="1" fill="#000"/>
<rect x="337" y="67" width="1" height="1" fill="#000"/>
<rect x="339" y="67" width="1" height="1" fill="#000"/>
<rect x="341" y="67" width="1" height="1" fill="#000"/>
<rect x="343" y="67" width="1" height="1" fill="#000"/>
<rect x="345" y="67" width="1" height="1" fill="#000"/>
<rect x="347" y="67" width="1" height="1" fill="#000"/>
<rect x="349" y="67" width="1" height="1" fill="#000"/>
<rect x="335" y="69" width="1" height="1" fill="#000"/>
<rect x="337" y="69" width="1" height="1" fill="#000"/>
<rect x="339" y="69" width="1" height="1" fill="#000"/>
<rect x="341" y="69" width="1" height="1" fill="#000"/>
<rect x="343" y="69" width="1" height="1" fill="#000"/>
<rect x="345" y="69" width="1" height="1" fill="#000"/>
<rect x="347" y="69" width="1" height="1" fill="#000"/>
<rect x="349" y="69" width="1" height="1" fill="#000"/>
<rect x="335" y="71" width="1" height="1" fill="#000"/>
<rect x="337" y="71" width="1" height="1" fill="#000"/>
<rect x="339" y="71" width="1" height="1" fill="#000"/>
<rect x="341" y="71" width="1" height="1" fill="#000"/>
<rect x="343" y="71" width="1" height="1" fill="#000"/>
<rect x="345" y="71" width="1" height="1" fill="#000"/>
<rect x="347" y="71" width="1" height="1" fill="#000"/>
<rect x="349" y="71" width="1" height="1" fill="#000"/>
<rect x="338" y="58" width="9" height="3" fill="#60e0e0"/>
<rect x="338" y="68" width="9" height="3" fill="#60e0e0"/>
<rect x="336" y="62" width="14" height="4" fill="#f0f0f0"/>
<rect x="336" y="63" width="1" height="1" fill="#000"/>
<rect x="338" y="63" width="1" height="1" fill="#000"/>
<rect x="340" y="63" width="1" height="1" fill="#000"/>
<rect x="342" y="63" width="1" height="1" fill="#000"/>
<rect x="344" y="63" width="1" height="1" fill="#000"/>
<rect x="346" y="63" width="1" height="1" fill="#000"/>
<rect x="348" y="63" width="1" height="1" fill="#000"/>
<rect x="336" y="65" width="1" height="1" fill="#000"/>
<rect x="338" y="65" width="1" height="1" fill="#000"/>
<rect x="340" y="65" width="1" height="1" fill="#000"/>
<rect x="342" y="65" width="1" height="1" fill="#000"/>
<rect x="344" y="65" width="1" height="1" fill="#000"/>
<rect x="346" y="65" width="1" height="1" fill="#000"/>
<rect x="348" y="65" width="1" height="1" fill="#000"/>
<path d="M361.5 57.5V61.5M359.5 59.5H363.5" stroke="#ffff00" fill="none" />
<rect x="364" y="57" width="2" height="2" fill="#ffff00"/>
<rect x="359" y="62" width="2" height="2" fill="#ffff00"/>
<rect x="362" y="62" width="8" height="9" fill="#fff"/>
<rect x="362" y="62" width="8" height="1" fill="#000"/>
<rect x="362" y="70" width="8" height="1" fill="#000"/>
<rect x="362" y="62" width="1" height="9" fill="#000"/>
<rect x="369" y="62" width="1" height="9" fill="#000"/>
<rect x="364" y="65" width="5" height="1" fill="#000"/>
<rect x="364" y="67" width="5" height="1" fill="#000"/>
<rect x="367" y="65" width="9" height="9" fill="#fff"/>
<rect x="367" y="65" width="9" height="1" fill="#000080"/>
<rect x="367" y="73" width="9" height="1" fill="#000080"/>
<rect x="367" y="65" width="1" height="9" fill="#000080"/>
<rect x="375" y="65" width="1" height="9" fill="#000080"/>
<rect x="369" y="68" width="5" height="1" fill="#000080"/>
<rect x="369" y="70" width="5" height="1" fill="#000080"/>
<rect x="386" y="56" width="1" height="1" fill="#c8c8c8"/>
<rect x="388" y="56" width="1" height="1" fill="#c8c8c8"/>
<rect x="390" y="56" width="1" height="1" fill="#c8c8c8"/>
<rect x="392" y="56" width="1" height="1" fill="#c8c8c8"/>
<rect x="394" y="56" width="1" height="1" fill="#c8c8c8"/>
<rect x="396" y="56" width="1" height="1" fill="#c8c8c8"/>
<rect x="398" y="56" width="1" height="1" fill="#c8c8c8"/>
<rect x="400" y="56" width="1" height="1" fill="#c8c8c8"/>
<rect x="402" y="56" width="1" height="1" fill="#c8c8c8"/>
<rect x="387" y="57" width="1" height="1" fill="#c8c8c8"/>
<rect x="389" y="57" width="1" height="1" fill="#c8c8c8"/>
<rect x="391" y="57" width="1" height="1" fill="#c8c8c8"/>
<rect x="393" y="57" width="1" height="1" fill="#c8c8c8"/>
<rect x="395" y="57" width="1" height="1" fill="#c8c8c8"/>
<rect x="397" y="57" width="1" height="1" fill="#c8c8c8"/>
<rect x="399" y="57" width="1" height="1" fill="#c8c8c8"/>
<rect x="401" y="57" width="1" height="1" fill="#c8c8c8"/>
<rect x="386" y="58" width="1" height="1" fill="#c8c8c8"/>
<rect x="388" y="58" width="1" height="1" fill="#c8c8c8"/>
<rect x="390" y="58" width="1" height="1" fill="#c8c8c8"/>
<rect x="392" y="58" width="1" height="1" fill="#c8c8c8"/>
<rect x="394" y="58" width="1" height="1" fill="#c8c8c8"/>
<rect x="396" y="58" width="1" height="1" fill="#c8c8c8"/>
<rect x="398" y="58" width="1" height="1" fill="#c8c8c8"/>
<rect x="400" y="58" width="1" height="1" fill="#c8c8c8"/>
<rect x="402" y="58" width="1" height="1" fill="#c8c8c8"/>
<rect x="387" y="59" width="1" height="1" fill="#c8c8c8"/>
<rect x="389" y="59" width="1" height="1" fill="#c8c8c8"/>
<rect x="391" y="59" width="1" height="1" fill="#c8c8c8"/>
<rect x="393" y="59" width="1" height="1" fill="#c8c8c8"/>
<rect x="395" y="59" width="1" height="1" fill="#c8c8c8"/>
<rect x="397" y="59" width="1" height="1" fill="#c8c8c8"/>
<rect x="399" y="59" width="1" height="1" fill="#c8c8c8"/>
<rect x="401" y="59" width="1" height="1" fill="#c8c8c8"/>
<rect x="386" y="60" width="1" height="1" fill="#c8c8c8"/>
<rect x="388" y="60" width="1" height="1" fill="#c8c8c8"/>
<rect x="390" y="60" width="1" height="1" fill="#c8c8c8"/>
<rect x="392" y="60" width="1" height="1" fill="#c8c8c8"/>
<rect x="394" y="60" width="1" height="1" fill="#c8c8c8"/>
<rect x="396" y="60" width="1" height="1" fill="#c8c8c8"/>
<rect x="398" y="60" width="1" height="1" fill="#c8c8c8"/>
<rect x="400" y="60" width="1" height="1" fill="#c8c8c8"/>
<rect x="402" y="60" width="1" height="1" fill="#c8c8c8"/>
<rect x="387" y="61" width="1" height="1" fill="#c8c8c8"/>
<rect x="389" y="61" width="1" height="1" fill="#c8c8c8"/>
<rect x="391" y="61" width="1" height="1" fill="#c8c8c8"/>
<rect x="393" y="61" width="1" height="1" fill="#c8c8c8"/>
<rect x="395" y="61" width="1" height="1" fill="#c8c8c8"/>
<rect x="397" y="61" width="1" height="1" fill="#c8c8c8"/>
<rect x="399" y="61" width="1" height="1" fill="#c8c8c8"/>
<rect x="401" y="61" width="1" height="1" fill="#c8c8c8"/>
<rect x="386" y="62" width="1" height="1" fill="#c8c8c8"/>
<rect x="388" y="62" width="1" height="1" fill="#c8c8c8"/>
<rect x="390" y="62" width="1" height="1" fill="#c8c8c8"/>
<rect x="392" y="62" width="1" height="1" fill="#c8c8c8"/>
<rect x="394" y="62" width="1" height="1" fill="#c8c8c8"/>
<rect x="396" y="62" width="1" height="1" fill="#c8c8c8"/>
<rect x="398" y="62" width="1" height="1" fill="#c8c8c8"/>
<rect x="400" y="62" width="1" height="1" fill="#c8c8c8"/>
<rect x="402" y="62" width="1" height="1" fill="#c8c8c8"/>
<rect x="387" y="63" width="1" height="1" fill="#c8c8c8"/>
<rect x="389" y="63" width="1" height="1" fill="#c8c8c8"/>
<rect x="391" y="63" width="1" height="1" fill="#c8c8c8"/>
<rect x="393" y="63" width="1" height="1" fill="#c8c8c8"/>
<rect x="395" y="63" width="1" height="1" fill="#c8c8c8"/>
<rect x="397" y="63" width="1" height="1" fill="#c8c8c8"/>
<rect x="399" y="63" width="1" height="1" fill="#c8c8c8"/>
<rect x="401" y="63" width="1" height="1" fill="#c8c8c8"/>
<rect x="386" y="64" width="1" height="1" fill="#c8c8c8"/>
<rect x="388" y="64" width="1" height="1" fill="#c8c8c8"/>
<rect x="390" y="64" width="1" height="1" fill="#c8c8c8"/>
<rect x="392" y="64" width="1" height="1" fill="#c8c8c8"/>
<rect x="394" y="64" width="1" height="1" fill="#c8c8c8"/>
<rect x="396" y="64" width="1" height="1" fill="#c8c8c8"/>
<rect x="398" y="64" width="1" height="1" fill="#c8c8c8"/>
<rect x="400" y="64" width="1" height="1" fill="#c8c8c8"/>
<rect x="402" y="64" width="1" height="1" fill="#c8c8c8"/>
<rect x="387" y="65" width="1" height="1" fill="#c8c8c8"/>
<rect x="389" y="65" width="1" height="1" fill="#c8c8c8"/>
<rect x="391" y="65" width="1" height="1" fill="#c8c8c8"/>
<rect x="393" y="65" width="1" height="1" fill="#c8c8c8"/>
<rect x="395" y="65" width="1" height="1" fill="#c8c8c8"/>
<rect x="397" y="65" width="1" height="1" fill="#c8c8c8"/>
<rect x="399" y="65" width="1" height="1" fill="#c8c8c8"/>
<rect x="401" y="65" width="1" height="1" fill="#c8c8c8"/>
<rect x="386" y="66" width="1" height="1" fill="#c8c8c8"/>
<rect x="388" y="66" width="1" height="1" fill="#c8c8c8"/>
<rect x="390" y="66" width="1" height="1" fill="#c8c8c8"/>
<rect x="392" y="66" width="1" height="1" fill="#c8c8c8"/>
<rect x="394" y="66" width="1" height="1" fill="#c8c8c8"/>
<rect x="396" y="66" width="1" height="1" fill="#c8c8c8"/>
<rect x="398" y="66" width="1" height="1" fill="#c8c8c8"/>
<rect x="400" y="66" width="1" height="1" fill="#c8c8c8"/>
<rect x="402" y="66" width="1" height="1" fill="#c8c8c8"/>
<rect x="387" y="67" width="1" height="1" fill="#c8c8c8"/>
<rect x="389" y="67" width="1" height="1" fill="#c8c8c8"/>
<rect x="391" y="67" width="1" height="1" fill="#c8c8c8"/>
<rect x="393" y="67" width="1" height="1" fill="#c8c8c8"/>
<rect x="395" y="67" width="1" height="1" fill="#c8c8c8"/>
<rect x="397" y="67" width="1" height="1" fill="#c8c8c8"/>
<rect x="399" y="67" width="1" height="1" fill="#c8c8c8"/>
<rect x="401" y="67" width="1" height="1" fill="#c8c8c8"/>
<rect x="386" y="68" width="1" height="1" fill="#c8c8c8"/>
<rect x="388" y="68" width="1" height="1" fill="#c8c8c8"/>
<rect x="390" y="68" width="1" height="1" fill="#c8c8c8"/>
<rect x="392" y="68" width="1" height="1" fill="#c8c8c8"/>
<rect x="394" y="68" width="1" height="1" fill="#c8c8c8"/>
<rect x="396" y="68" width="1" height="1" fill="#c8c8c8"/>
<rect x="398" y="68" width="1" height="1" fill="#c8c8c8"/>
<rect x="400" y="68" width="1" height="1" fill="#c8c8c8"/>
<rect x="402" y="68" width="1" height="1" fill="#c8c8c8"/>
<rect x="387" y="69" width="1" height="1" fill="#c8c8c8"/>
<rect x="389" y="69" width="1" height="1" fill="#c8c8c8"/>
<rect x="391" y="69" width="1" height="1" fill="#c8c8c8"/>
<rect x="393" y="69" width="1" height="1" fill="#c8c8c8"/>
<rect x="395" y="69" width="1" height="1" fill="#c8c8c8"/>
<rect x="397" y="69" width="1" height="1" fill="#c8c8c8"/>
<rect x="399" y="69" width="1" height="1" fill="#c8c8c8"/>
<rect x="401" y="69" width="1" height="1" fill="#c8c8c8"/>
<rect x="386" y="70" width="1" height="1" fill="#c8c8c8"/>
<rect x="388" y="70" width="1" height="1" fill="#c8c8c8"/>
<rect x="390" y="70" width="1" height="1" fill="#c8c8c8"/>
<rect x="392" y="70" width="1" height="1" fill="#c8c8c8"/>
<rect x="394" y="70" width="1" height="1" fill="#c8c8c8"/>
<rect x="396" y="70" width="1" height="1" fill="#c8c8c8"/>
<rect x="398" y="70" width="1" height="1" fill="#c8c8c8"/>
<rect x="400" y="70" width="1" height="1" fill="#c8c8c8"/>
<rect x="402" y="70" width="1" height="1" fill="#c8c8c8"/>
<rect x="387" y="71" width="1" height="1" fill="#c8c8c8"/>
<rect x="389" y="71" width="1" height="1" fill="#c8c8c8"/>
<rect x="391" y="71" width="1" height="1" fill="#c8c8c8"/>
<rect x="393" y="71" width="1" height="1" fill="#c8c8c8"/>
<rect x="395" y="71" width="1" height="1" fill="#c8c8c8"/>
<rect x="397" y="71" width="1" height="1" fill="#c8c8c8"/>
<rect x="399" y="71" width="1" height="1" fill="#c8c8c8"/>
<rect x="401" y="71" width="1" height="1" fill="#c8c8c8"/>
<rect x="386" y="72" width="1" height="1" fill="#c8c8c8"/>
<rect x="388" y="72" width="1" height="1" fill="#c8c8c8"/>
<rect x="390" y="72" width="1" height="1" fill="#c8c8c8"/>
<rect x="392" y="72" width="1" height="1" fill="#c8c8c8"/>
<rect x="394" y="72" width="1" height="1" fill="#c8c8c8"/>
<rect x="396" y="72" width="1" height="1" fill="#c8c8c8"/>
<rect x="398" y="72" width="1" height="1" fill="#c8c8c8"/>
<rect x="400" y="72" width="1" height="1" fill="#c8c8c8"/>
<rect x="402" y="72" width="1" height="1" fill="#c8c8c8"/>
<rect x="386" y="56" width="1" height="1" fill="#0000ff"/>
<rect x="388" y="56" width="1" height="1" fill="#0000ff"/>
<rect x="390" y="56" width="1" height="1" fill="#0000ff"/>
<rect x="392" y="56" width="1" height="1" fill="#0000ff"/>
<rect x="394" y="56" width="1" height="1" fill="#0000ff"/>
<rect x="396" y="56" width="1" height="1" fill="#0000ff"/>
<rect x="398" y="56" width="1" height="1" fill="#0000ff"/>
<rect x="400" y="56" width="1" height="1" fill="#0000ff"/>
<rect x="386" y="58" width="1" height="1" fill="#0000ff"/>
<rect x="388" y="58" width="1" height="1" fill="#0000ff"/>
<rect x="390" y="58" width="1" height="1" fill="#0000ff"/>
<rect x="392" y="58" width="1" height="1" fill="#0000ff"/>
<rect x="394" y="58" width="1" height="1" fill="#0000ff"/>
<rect x="396" y="58" width="1" height="1" fill="#0000ff"/>
<rect x="398" y="58" width="1" height="1" fill="#0000ff"/>
<rect x="400" y="58" width="1" height="1" fill="#0000ff"/>
<rect x="386" y="60" width="1" height="1" fill="#0000ff"/>
<rect x="388" y="60" width="1" height="1" fill="#0000ff"/>
<rect x="390" y="60" width="1" height="1" fill="#0000ff"/>
<rect x="392" y="60" width="1" height="1" fill="#0000ff"/>
<rect x="394" y="60" width="1" height="1" fill="#0000ff"/>
<rect x="396" y="60" width="1" height="1" fill="#0000ff"/>
<rect x="398" y="60" width="1" height="1" fill="#0000ff"/>
<rect x="400" y="60" width="1" height="1" fill="#0000ff"/>
<rect x="386" y="62" width="1" height="1" fill="#0000ff"/>
<rect x="388" y="62" width="1" height="1" fill="#0000ff"/>
<rect x="390" y="62" width="1" height="1" fill="#0000ff"/>
<rect x="392" y="62" width="1" height="1" fill="#0000ff"/>
<rect x="394" y="62" width="1" height="1" fill="#0000ff"/>
<rect x="396" y="62" width="1" height="1" fill="#0000ff"/>
<rect x="398" y="62" width="1" height="1" fill="#0000ff"/>
<rect x="400" y="62" width="1" height="1" fill="#0000ff"/>
<rect x="386" y="64" width="1" height="1" fill="#0000ff"/>
<rect x="388" y="64" width="1" height="1" fill="#0000ff"/>
<rect x="390" y="64" width="1" height="1" fill="#0000ff"/>
<rect x="392" y="64" width="1" height="1" fill="#0000ff"/>
<rect x="394" y="64" width="1" height="1" fill="#0000ff"/>
<rect x="396" y="64" width="1" height="1" fill="#0000ff"/>
<rect x="398" y="64" width="1" height="1" fill="#0000ff"/>
<rect x="400" y="64" width="1" height="1" fill="#0000ff"/>
<rect x="386" y="66" width="1" height="1" fill="#0000ff"/>
<rect x="388" y="66" width="1" height="1" fill="#0000ff"/>
<rect x="390" y="66" width="1" height="1" fill="#0000ff"/>
<rect x="392" y="66" width="1" height="1" fill="#0000ff"/>
<rect x="394" y="66" width="1" height="1" fill="#0000ff"/>
<rect x="396" y="66" width="1" height="1" fill="#0000ff"/>
<rect x="398" y="66" width="1" height="1" fill="#0000ff"/>
<rect x="400" y="66" width="1" height="1" fill="#0000ff"/>
<path d="M389.5 66.5L397.5 72.5" stroke="#000" fill="none" />
<path d="M390.5 65.5L398.5 71.5" stroke="#808080" fill="none" />
<rect x="411" y="56" width="1" height="1" fill="#c8c8c8"/>
<rect x="413" y="56" width="1" height="1" fill="#c8c8c8"/>
<rect x="415" y="56" width="1" height="1" fill="#c8c8c8"/>
<rect x="417" y="56" width="1" height="1" fill="#c8c8c8"/>
<rect x="419" y="56" width="1" height="1" fill="#c8c8c8"/>
<rect x="421" y="56" width="1" height="1" fill="#c8c8c8"/>
<rect x="423" y="56" width="1" height="1" fill="#c8c8c8"/>
<rect x="425" y="56" width="1" height="1" fill="#c8c8c8"/>
<rect x="427" y="56" width="1" height="1" fill="#c8c8c8"/>
<rect x="412" y="57" width="1" height="1" fill="#c8c8c8"/>
<rect x="414" y="57" width="1" height="1" fill="#c8c8c8"/>
<rect x="416" y="57" width="1" height="1" fill="#c8c8c8"/>
<rect x="418" y="57" width="1" height="1" fill="#c8c8c8"/>
<rect x="420" y="57" width="1" height="1" fill="#c8c8c8"/>
<rect x="422" y="57" width="1" height="1" fill="#c8c8c8"/>
<rect x="424" y="57" width="1" height="1" fill="#c8c8c8"/>
<rect x="426" y="57" width="1" height="1" fill="#c8c8c8"/>
<rect x="411" y="58" width="1" height="1" fill="#c8c8c8"/>
<rect x="413" y="58" width="1" height="1" fill="#c8c8c8"/>
<rect x="415" y="58" width="1" height="1" fill="#c8c8c8"/>
<rect x="417" y="58" width="1" height="1" fill="#c8c8c8"/>
<rect x="419" y="58" width="1" height="1" fill="#c8c8c8"/>
<rect x="421" y="58" width="1" height="1" fill="#c8c8c8"/>
<rect x="423" y="58" width="1" height="1" fill="#c8c8c8"/>
<rect x="425" y="58" width="1" height="1" fill="#c8c8c8"/>
<rect x="427" y="58" width="1" height="1" fill="#c8c8c8"/>
<rect x="412" y="59" width="1" height="1" fill="#c8c8c8"/>
<rect x="414" y="59" width="1" height="1" fill="#c8c8c8"/>
<rect x="416" y="59" width="1" height="1" fill="#c8c8c8"/>
<rect x="418" y="59" width="1" height="1" fill="#c8c8c8"/>
<rect x="420" y="59" width="1" height="1" fill="#c8c8c8"/>
<rect x="422" y="59" width="1" height="1" fill="#c8c8c8"/>
<rect x="424" y="59" width="1" height="1" fill="#c8c8c8"/>
<rect x="426" y="59" width="1" height="1" fill="#c8c8c8"/>
<rect x="411" y="60" width="1" height="1" fill="#c8c8c8"/>
<rect x="413" y="60" width="1" height="1" fill="#c8c8c8"/>
<rect x="415" y="60" width="1" height="1" fill="#c8c8c8"/>
<rect x="417" y="60" width="1" height="1" fill="#c8c8c8"/>
<rect x="419" y="60" width="1" height="1" fill="#c8c8c8"/>
<rect x="421" y="60" width="1" height="1" fill="#c8c8c8"/>
<rect x="423" y="60" width="1" height="1" fill="#c8c8c8"/>
<rect x="425" y="60" width="1" height="1" fill="#c8c8c8"/>
<rect x="427" y="60" width="1" height="1" fill="#c8c8c8"/>
<rect x="412" y="61" width="1" height="1" fill="#c8c8c8"/>
<rect x="414" y="61" width="1" height="1" fill="#c8c8c8"/>
<rect x="416" y="61" width="1" height="1" fill="#c8c8c8"/>
<rect x="418" y="61" width="1" height="1" fill="#c8c8c8"/>
<rect x="420" y="61" width="1" height="1" fill="#c8c8c8"/>
<rect x="422" y="61" width="1" height="1" fill="#c8c8c8"/>
<rect x="424" y="61" width="1" height="1" fill="#c8c8c8"/>
<rect x="426" y="61" width="1" height="1" fill="#c8c8c8"/>
<rect x="411" y="62" width="1" height="1" fill="#c8c8c8"/>
<rect x="413" y="62" width="1" height="1" fill="#c8c8c8"/>
<rect x="415" y="62" width="1" height="1" fill="#c8c8c8"/>
<rect x="417" y="62" width="1" height="1" fill="#c8c8c8"/>
<rect x="419" y="62" width="1" height="1" fill="#c8c8c8"/>
<rect x="421" y="62" width="1" height="1" fill="#c8c8c8"/>
<rect x="423" y="62" width="1" height="1" fill="#c8c8c8"/>
<rect x="425" y="62" width="1" height="1" fill="#c8c8c8"/>
<rect x="427" y="62" width="1" height="1" fill="#c8c8c8"/>
<rect x="412" y="63" width="1" height="1" fill="#c8c8c8"/>
<rect x="414" y="63" width="1" height="1" fill="#c8c8c8"/>
<rect x="416" y="63" width="1" height="1" fill="#c8c8c8"/>
<rect x="418" y="63" width="1" height="1" fill="#c8c8c8"/>
<rect x="420" y="63" width="1" height="1" fill="#c8c8c8"/>
<rect x="422" y="63" width="1" height="1" fill="#c8c8c8"/>
<rect x="424" y="63" width="1" height="1" fill="#c8c8c8"/>
<rect x="426" y="63" width="1" height="1" fill="#c8c8c8"/>
<rect x="411" y="64" width="1" height="1" fill="#c8c8c8"/>
<rect x="413" y="64" width="1" height="1" fill="#c8c8c8"/>
<rect x="415" y="64" width="1" height="1" fill="#c8c8c8"/>
<rect x="417" y="64" width="1" height="1" fill="#c8c8c8"/>
<rect x="419" y="64" width="1" height="1" fill="#c8c8c8"/>
<rect x="421" y="64" width="1" height="1" fill="#c8c8c8"/>
<rect x="423" y="64" width="1" height="1" fill="#c8c8c8"/>
<rect x="425" y="64" width="1" height="1" fill="#c8c8c8"/>
<rect x="427" y="64" width="1" height="1" fill="#c8c8c8"/>
<rect x="412" y="65" width="1" height="1" fill="#c8c8c8"/>
<rect x="414" y="65" width="1" height="1" fill="#c8c8c8"/>
<rect x="416" y="65" width="1" height="1" fill="#c8c8c8"/>
<rect x="418" y="65" width="1" height="1" fill="#c8c8c8"/>
<rect x="420" y="65" width="1" height="1" fill="#c8c8c8"/>
<rect x="422" y="65" width="1" height="1" fill="#c8c8c8"/>
<rect x="424" y="65" width="1" height="1" fill="#c8c8c8"/>
<rect x="426" y="65" width="1" height="1" fill="#c8c8c8"/>
<rect x="411" y="66" width="1" height="1" fill="#c8c8c8"/>
<rect x="413" y="66" width="1" height="1" fill="#c8c8c8"/>
<rect x="415" y="66" width="1" height="1" fill="#c8c8c8"/>
<rect x="417" y="66" width="1" height="1" fill="#c8c8c8"/>
<rect x="419" y="66" width="1" height="1" fill="#c8c8c8"/>
<rect x="421" y="66" width="1" height="1" fill="#c8c8c8"/>
<rect x="423" y="66" width="1" height="1" fill="#c8c8c8"/>
<rect x="425" y="66" width="1" height="1" fill="#c8c8c8"/>
<rect x="427" y="66" width="1" height="1" fill="#c8c8c8"/>
<rect x="412" y="67" width="1" height="1" fill="#c8c8c8"/>
<rect x="414" y="67" width="1" height="1" fill="#c8c8c8"/>
<rect x="416" y="67" width="1" height="1" fill="#c8c8c8"/>
<rect x="418" y="67" width="1" height="1" fill="#c8c8c8"/>
<rect x="420" y="67" width="1" height="1" fill="#c8c8c8"/>
<rect x="422" y="67" width="1" height="1" fill="#c8c8c8"/>
<rect x="424" y="67" width="1" height="1" fill="#c8c8c8"/>
<rect x="426" y="67" width="1" height="1" fill="#c8c8c8"/>
<rect x="411" y="68" width="1" height="1" fill="#c8c8c8"/>
<rect x="413" y="68" width="1" height="1" fill="#c8c8c8"/>
<rect x="415" y="68" width="1" height="1" fill="#c8c8c8"/>
<rect x="417" y="68" width="1" height="1" fill="#c8c8c8"/>
<rect x="419" y="68" width="1" height="1" fill="#c8c8c8"/>
<rect x="421" y="68" width="1" height="1" fill="#c8c8c8"/>
<rect x="423" y="68" width="1" height="1" fill="#c8c8c8"/>
<rect x="425" y="68" width="1" height="1" fill="#c8c8c8"/>
<rect x="427" y="68" width="1" height="1" fill="#c8c8c8"/>
<rect x="412" y="69" width="1" height="1" fill="#c8c8c8"/>
<rect x="414" y="69" width="1" height="1" fill="#c8c8c8"/>
<rect x="416" y="69" width="1" height="1" fill="#c8c8c8"/>
<rect x="418" y="69" width="1" height="1" fill="#c8c8c8"/>
<rect x="420" y="69" width="1" height="1" fill="#c8c8c8"/>
<rect x="422" y="69" width="1" height="1" fill="#c8c8c8"/>
<rect x="424" y="69" width="1" height="1" fill="#c8c8c8"/>
<rect x="426" y="69" width="1" height="1" fill="#c8c8c8"/>
<rect x="411" y="70" width="1" height="1" fill="#c8c8c8"/>
<rect x="413" y="70" width="1" height="1" fill="#c8c8c8"/>
<rect x="415" y="70" width="1" height="1" fill="#c8c8c8"/>
<rect x="417" y="70" width="1" height="1" fill="#c8c8c8"/>
<rect x="419" y="70" width="1" height="1" fill="#c8c8c8"/>
<rect x="421" y="70" width="1" height="1" fill="#c8c8c8"/>
<rect x="423" y="70" width="1" height="1" fill="#c8c8c8"/>
<rect x="425" y="70" width="1" height="1" fill="#c8c8c8"/>
<rect x="427" y="70" width="1" height="1" fill="#c8c8c8"/>
<rect x="412" y="71" width="1" height="1" fill="#c8c8c8"/>
<rect x="414" y="71" width="1" height="1" fill="#c8c8c8"/>
<rect x="416" y="71" width="1" height="1" fill="#c8c8c8"/>
<rect x="418" y="71" width="1" height="1" fill="#c8c8c8"/>
<rect x="420" y="71" width="1" height="1" fill="#c8c8c8"/>
<rect x="422" y="71" width="1" height="1" fill="#c8c8c8"/>
<rect x="424" y="71" width="1" height="1" fill="#c8c8c8"/>
<rect x="426" y="71" width="1" height="1" fill="#c8c8c8"/>
<rect x="411" y="72" width="1" height="1" fill="#c8c8c8"/>
<rect x="413" y="72" width="1" height="1" fill="#c8c8c8"/>
<rect x="415" y="72" width="1" height="1" fill="#c8c8c8"/>
<rect x="417" y="72" width="1" height="1" fill="#c8c8c8"/>
<rect x="419" y="72" width="1" height="1" fill="#c8c8c8"/>
<rect x="421" y="72" width="1" height="1" fill="#c8c8c8"/>
<rect x="423" y="72" width="1" height="1" fill="#c8c8c8"/>
<rect x="425" y="72" width="1" height="1" fill="#c8c8c8"/>
<rect x="427" y="72" width="1" height="1" fill="#c8c8c8"/>
<rect x="426" y="60" width="1" height="1" fill="#008000"/>
<rect x="425" y="61" width="1" height="1" fill="#008000"/>
<rect x="427" y="61" width="1" height="1" fill="#008000"/>
<rect x="424" y="62" width="1" height="1" fill="#008000"/>
<rect x="426" y="62" width="1" height="1" fill="#008000"/>
<rect x="423" y="63" width="1" height="1" fill="#008000"/>
<rect x="425" y="63" width="1" height="1" fill="#008000"/>
<rect x="427" y="63" width="1" height="1" fill="#008000"/>
<rect x="422" y="64" width="1" height="1" fill="#008000"/>
<rect x="424" y="64" width="1" height="1" fill="#008000"/>
<rect x="426" y="64" width="1" height="1" fill="#008000"/>
<rect x="421" y="65" width="1" height="1" fill="#008000"/>
<rect x="423" y="65" width="1" height="1" fill="#008000"/>
<rect x="425" y="65" width="1" height="1" fill="#008000"/>
<rect x="427" y="65" width="1" height="1" fill="#008000"/>
<rect x="420" y="66" width="1" height="1" fill="#008000"/>
<rect x="422" y="66" width="1" height="1" fill="#008000"/>
<rect x="424" y="66" width="1" height="1" fill="#008000"/>
<rect x="426" y="66" width="1" height="1" fill="#008000"/>
<rect x="419" y="67" width="1" height="1" fill="#008000"/>
<rect x="421" y="67" width="1" height="1" fill="#008000"/>
<rect x="423" y="67" width="1" height="1" fill="#008000"/>
<rect x="425" y="67" width="1" height="1" fill="#008000"/>
<rect x="427" y="67" width="1" height="1" fill="#008000"/>
<rect x="418" y="68" width="1" height="1" fill="#008000"/>
<rect x="420" y="68" width="1" height="1" fill="#008000"/>
<rect x="422" y="68" width="1" height="1" fill="#008000"/>
<rect x="424" y="68" width="1" height="1" fill="#008000"/>
<rect x="426" y="68" width="1" height="1" fill="#008000"/>
<rect x="417" y="69" width="1" height="1" fill="#008000"/>
<rect x="419" y="69" width="1" height="1" fill="#008000"/>
<rect x="421" y="69" width="1" height="1" fill="#008000"/>
<rect x="423" y="69" width="1" height="1" fill="#008000"/>
<rect x="425" y="69" width="1" height="1" fill="#008000"/>
<rect x="427" y="69" width="1" height="1" fill="#008000"/>
<rect x="416" y="70" width="1" height="1" fill="#008000"/>
<rect x="418" y="70" width="1" height="1" fill="#008000"/>
<rect x="420" y="70" width="1" height="1" fill="#008000"/>
<rect x="422" y="70" width="1" height="1" fill="#008000"/>
<rect x="424" y="70" width="1" height="1" fill="#008000"/>
<rect x="426" y="70" width="1" height="1" fill="#008000"/>
<rect x="415" y="71" width="1" height="1" fill="#008000"/>
<rect x="417" y="71" width="1" height="1" fill="#008000"/>
<rect x="419" y="71" width="1" height="1" fill="#008000"/>
<rect x="421" y="71" width="1" height="1" fill="#008000"/>
<rect x="423" y="71" width="1" height="1" fill="#008000"/>
<rect x="425" y="71" width="1" height="1" fill="#008000"/>
<rect x="427" y="71" width="1" height="1" fill="#008000"/>
<rect x="414" y="72" width="1" height="1" fill="#008000"/>
<rect x="416" y="72" width="1" height="1" fill="#008000"/>
<rect x="418" y="72" width="1" height="1" fill="#008000"/>
<rect x="420" y="72" width="1" height="1" fill="#008000"/>
<rect x="422" y="72" width="1" height="1" fill="#008000"/>
<rect x="424" y="72" width="1" height="1" fill="#008000"/>
<rect x="426" y="72" width="1" height="1" fill="#008000"/>
<rect x="418" y="69" width="2" height="1" fill="#00ff00"/>
<rect x="422" y="65" width="2" height="1" fill="#00ff00"/>
<path d="M416.5 58.5L419.5 57.5L423.5 61.5" stroke="#000" fill="none" />
<rect x="421" y="61" width="3" height="2" fill="#000"/>
<rect x="61" y="148" width="17" height="17" fill="#00ffff"/>
<rect x="61" y="148" width="17" height="1" fill="#000"/>
<rect x="61" y="164" width="17" height="1" fill="#000"/>
<rect x="61" y="148" width="1" height="17" fill="#000"/>
<rect x="77" y="148" width="1" height="17" fill="#000"/>
<rect x="69" y="148" width="1" height="17" fill="#000"/>
<path d="M69.5 148.5L77.5 156.5L69.5 164.5" stroke="#000" fill="none" />
<rect x="140" y="148" width="9" height="17" fill="#fff"/>
<rect x="140" y="148" width="9" height="1" fill="#000"/>
<rect x="140" y="164" width="9" height="1" fill="#000"/>
<rect x="140" y="148" width="1" height="17" fill="#000"/>
<rect x="148" y="148" width="1" height="17" fill="#000"/>
<rect x="141" y="149" width="7" height="8" fill="#00ffff"/>
<path d="M140.5 148.5L148.5 156.5" stroke="#000" fill="none" />
<rect x="140" y="157" width="9" height="1" fill="#000"/>
<rect x="142" y="158" width="4" height="1" fill="#fff"/>
<rect x="140" y="159" width="9" height="1" fill="#000"/>
<path d="M142.5 163.5L146.5 160.5" stroke="#000" fill="none" />
<rect x="211" y="148" width="16" height="17" fill="#00ffff"/>
<rect x="211" y="148" width="16" height="1" fill="#000"/>
<rect x="211" y="164" width="16" height="1" fill="#000"/>
<rect x="211" y="148" width="1" height="17" fill="#000"/>
<rect x="226" y="148" width="1" height="17" fill="#000"/>
<rect x="214" y="148" width="1" height="17" fill="#000"/>
<rect x="217" y="148" width="1" height="17" fill="#000"/>
<rect x="220" y="148" width="1" height="17" fill="#000"/>
<rect x="223" y="148" width="1" height="17" fill="#000"/>
<rect x="211" y="153" width="16" height="1" fill="#000"/>
<rect x="211" y="158" width="16" height="1" fill="#000"/>
<rect x="526" y="149" width="12" height="14" fill="#00ffff"/>
<rect x="526" y="149" width="12" height="1" fill="#008080"/>
<rect x="526" y="162" width="12" height="1" fill="#008080"/>
<rect x="526" y="149" width="1" height="14" fill="#008080"/>
<rect x="537" y="149" width="1" height="14" fill="#008080"/>
<rect x="523" y="151" width="12" height="14" fill="#00ffff"/>
<rect x="523" y="151" width="12" height="1" fill="#008080"/>
<rect x="523" y="164" width="12" height="1" fill="#008080"/>
<rect x="523" y="151" width="1" height="14" fill="#008080"/>
<rect x="534" y="151" width="1" height="14" fill="#008080"/>
<rect x="526" y="158" width="1" height="1" fill="#0000ff"/>
<rect x="527" y="157" width="1" height="1" fill="#0000ff"/>
<rect x="528" y="156" width="1" height="1" fill="#0000ff"/>
<rect x="529" y="155" width="1" height="1" fill="#0000ff"/>
<rect x="530" y="154" width="1" height="1" fill="#0000ff"/>
<rect x="531" y="159" width="1" height="1" fill="#0000ff"/>
<rect x="532" y="158" width="1" height="1" fill="#0000ff"/>
<rect x="533" y="157" width="1" height="1" fill="#0000ff"/>
<rect x="529" y="160" width="1" height="1" fill="#0000ff"/>
<rect x="530" y="159" width="1" height="1" fill="#0000ff"/>
<path d="M751 155L762 151L757 156Z" stroke="none" fill="#ffff00" />
<path d="M762 151L757 161L756 156Z" stroke="none" fill="#ff0000" />
<rect x="1150" y="130" width="5" height="1" fill="#000"/>
<rect x="1150" y="132" width="9" height="1" fill="#000"/>
<rect x="1150" y="134" width="7" height="1" fill="#000"/>
<rect x="1150" y="136" width="8" height="1" fill="#000"/>
<rect x="1175" y="130" width="3" height="1" fill="#000"/>
<rect x="1175" y="132" width="6" height="1" fill="#000"/>
<rect x="1175" y="134" width="5" height="1" fill="#000"/>
<rect x="1175" y="136" width="6" height="1" fill="#000"/>
<rect x="1182" y="129" width="7" height="10" fill="#00ffff"/>
<rect x="1182" y="129" width="7" height="1" fill="#000"/>
<rect x="1182" y="138" width="7" height="1" fill="#000"/>
<rect x="1182" y="129" width="1" height="10" fill="#000"/>
<rect x="1188" y="129" width="1" height="10" fill="#000"/>
<path d="M1183.5 130.5L1187.5 133.5L1183.5 137.5" stroke="#000" fill="none" />
<rect x="1203" y="127" width="10" height="13" fill="#fff"/>
<rect x="1203" y="127" width="10" height="1" fill="#000"/>
<rect x="1203" y="139" width="10" height="1" fill="#000"/>
<rect x="1203" y="127" width="1" height="13" fill="#000"/>
<rect x="1212" y="127" width="1" height="13" fill="#000"/>
<rect x="1205" y="129" width="6" height="9" fill="#00ffff"/>
<rect x="1205" y="129" width="6" height="1" fill="#000"/>
<rect x="1205" y="137" width="6" height="1" fill="#000"/>
<rect x="1205" y="129" width="1" height="9" fill="#000"/>
<rect x="1210" y="129" width="1" height="9" fill="#000"/>
<path d="M1205.5 130.5L1209.5 133.5L1205.5 136.5" stroke="#000" fill="none" />
<path d="M1239 130H1231L1236 133.5L1231 137.5H1239" stroke="#008000" fill="none" stroke-width="1.6"/>
<rect x="1238" y="129" width="2" height="2" fill="#008000"/>
<rect x="1238" y="137" width="2" height="2" fill="#008000"/>
<rect x="1255" y="128" width="1" height="1" fill="#000"/>
<rect x="1257" y="128" width="1" height="1" fill="#000"/>
<rect x="1259" y="128" width="1" height="1" fill="#000"/>
<rect x="1255" y="130" width="1" height="1" fill="#000"/>
<rect x="1257" y="130" width="1" height="1" fill="#000"/>
<rect x="1259" y="130" width="1" height="1" fill="#000"/>
<rect x="1255" y="132" width="1" height="1" fill="#000"/>
<rect x="1257" y="132" width="1" height="1" fill="#000"/>
<rect x="1259" y="132" width="1" height="1" fill="#000"/>
<rect x="1255" y="134" width="1" height="1" fill="#000"/>
<rect x="1257" y="134" width="1" height="1" fill="#000"/>
<rect x="1259" y="134" width="1" height="1" fill="#000"/>
<rect x="1255" y="136" width="1" height="1" fill="#000"/>
<rect x="1257" y="136" width="1" height="1" fill="#000"/>
<rect x="1259" y="136" width="1" height="1" fill="#000"/>
<rect x="1256" y="129" width="3" height="7" fill="#00e0e0"/>
<rect x="1262" y="130" width="1" height="1" fill="#ff0000"/>
<rect x="1264" y="130" width="1" height="1" fill="#ff0000"/>
<rect x="1262" y="132" width="1" height="1" fill="#ff0000"/>
<rect x="1264" y="132" width="1" height="1" fill="#ff0000"/>
<rect x="1261" y="135" width="1" height="1" fill="#ff0000"/>
<rect x="1260" y="136" width="1" height="1" fill="#ff0000"/>
<rect x="1263" y="137" width="1" height="1" fill="#ff0000"/>
<rect x="1266" y="128" width="1" height="1" fill="#808080"/>
<rect x="1268" y="128" width="1" height="1" fill="#808080"/>
<rect x="1270" y="128" width="1" height="1" fill="#808080"/>
<rect x="1267" y="129" width="1" height="1" fill="#808080"/>
<rect x="1269" y="129" width="1" height="1" fill="#808080"/>
<rect x="1266" y="130" width="1" height="1" fill="#808080"/>
<rect x="1268" y="130" width="1" height="1" fill="#808080"/>
<rect x="1270" y="130" width="1" height="1" fill="#808080"/>
<rect x="1267" y="131" width="1" height="1" fill="#808080"/>
<rect x="1269" y="131" width="1" height="1" fill="#808080"/>
<rect x="1266" y="132" width="1" height="1" fill="#808080"/>
<rect x="1268" y="132" width="1" height="1" fill="#808080"/>
<rect x="1270" y="132" width="1" height="1" fill="#808080"/>
<rect x="1267" y="133" width="1" height="1" fill="#808080"/>
<rect x="1269" y="133" width="1" height="1" fill="#808080"/>
<rect x="1266" y="134" width="1" height="1" fill="#808080"/>
<rect x="1268" y="134" width="1" height="1" fill="#808080"/>
<rect x="1270" y="134" width="1" height="1" fill="#808080"/>
<rect x="1267" y="129" width="2" height="1" fill="#00e0e0"/>
<rect x="1268" y="131" width="2" height="1" fill="#00e0e0"/>
<rect x="1267" y="133" width="2" height="1" fill="#00e0e0"/>
<text x="1282" y="137" font-family="Liberation Sans" font-size="9" fill="#800080" letter-spacing="0">CAD</text>
</svg>
<div class="bb" style="left:24px;top:653px;width:90px"><u>O</u>pen</div>
<div class="bb" style="left:122px;top:653px;width:90px"><u>I</u>nsert</div>
<div class="bb" style="left:220px;top:653px;width:90px">Co<u>m</u>pact</div>
<div class="bb" style="left:318px;top:653px;width:90px"><u>S</u>plit</div>
<div class="bb" style="left:1142px;top:653px;width:90px"><u>C</u>opy</div>
<div class="bb" style="left:1240px;top:653px;width:90px">De<u>l</u>ete</div>
<div class="bb" style="left:17px;top:697px;width:80px;height:22px;line-height:20px">O<u>K</u></div>
<div class="bb" style="left:113px;top:697px;width:80px;height:22px;line-height:20px">Cancel</div>
</body></html>
